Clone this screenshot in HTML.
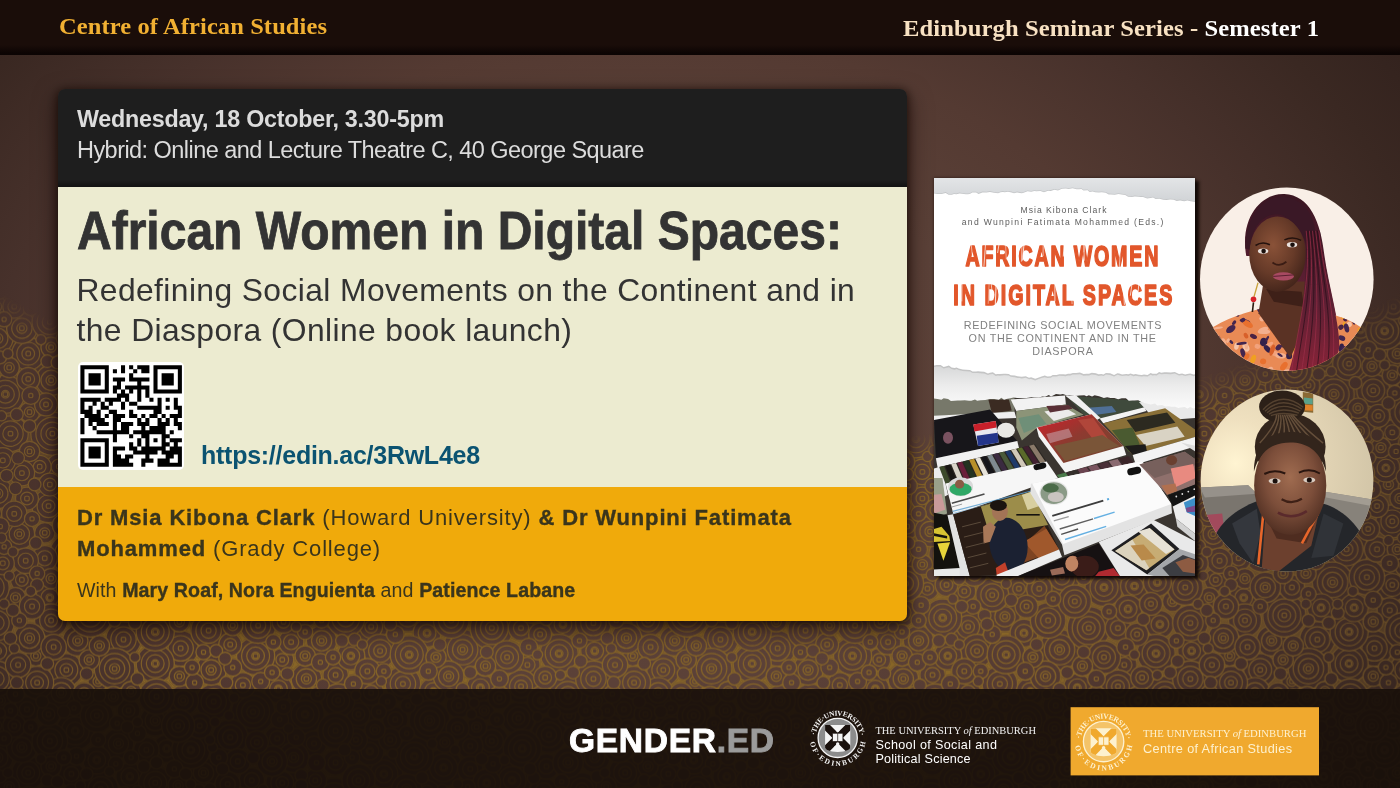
<!DOCTYPE html>
<html lang="en">
<head>
<meta charset="utf-8">
<title>African Women in Digital Spaces – Centre of African Studies</title>
<style>
html,body{margin:0;padding:0}
body{width:1400px;height:788px;position:relative;overflow:hidden;background:radial-gradient(ellipse 950px 700px at 650px 420px,#5f433a 0%,#5b4138 38%,#543a32 55%,#47312b 70%,#3a2822 85%,#30201c 100%);font-family:"Liberation Sans",sans-serif}
.abs{position:absolute}
#card,.hd,#ports,#book{will-change:transform}
#pat{left:0;top:0;width:1400px;height:788px}
.pf{fill:#000;stroke:#fff;stroke-width:.98}
.pr{fill:none;stroke:#fff;stroke-width:.94}
#topbar{left:0;top:0;width:1400px;height:54.5px;background:linear-gradient(180deg,#1a0d09 0,#1a0d09 45px,#0c0403 53px,#0b0403 100%)}
#footer{left:0;top:689px;width:1400px;height:99px;background:rgba(24,15,10,.915)}
.hd{font-family:"Liberation Serif",serif;font-weight:700;font-size:24.5px;line-height:30px;white-space:pre;top:10px}
#card{left:58px;top:89px;width:849px;height:532px;border-radius:7px;overflow:hidden;box-shadow:0 2px 8px 1px rgba(20,8,4,.75),0 9px 22px 2px rgba(20,8,4,.5)}
#c1{left:0;top:0;width:849px;height:98px;background:linear-gradient(180deg,#1e1e1e 0,#1e1e1e 91px,#121212 98px)}
#c2{left:0;top:98px;width:849px;height:301px;background:#ecebd0}
#c3{left:0;top:398.4px;width:849px;height:133.6px;background:#f0aa0b}
.t{position:absolute;white-space:pre;transform-origin:0 50%}
#c4 b{-webkit-text-stroke:.35px #3a351c}
</style>
</head>
<body>
<svg id="pat" class="abs" width="1400" height="788" viewBox="0 0 1400 788">
<defs><g id="k4"><circle r="4" class="pf"/></g><g id="k5"><circle r="5" class="pf"/></g><g id="k6"><circle r="6" class="pf"/><rect x="-1.6" y="-1.6" width="3.2" height="3.2" rx="1" class="pr"/></g><g id="k7"><circle r="7" class="pf"/><rect x="-1.6" y="-1.6" width="3.2" height="3.2" rx="1" class="pr"/></g><g id="k8"><circle r="8" class="pf"/><circle r="4.0" class="pr"/><rect x="-1.8" y="-1.8" width="3.6" height="3.6" rx="1.1" class="pr"/></g><g id="k9"><circle r="9" class="pf"/><circle r="5.0" class="pr"/><rect x="-1.8" y="-1.8" width="3.6" height="3.6" rx="1.1" class="pr"/></g><g id="k10"><circle r="10" class="pf"/><circle r="6.0" class="pr"/><rect x="-1.8" y="-1.8" width="3.6" height="3.6" rx="1.1" class="pr"/></g><g id="k11"><circle r="11" class="pf"/><circle r="7.0" class="pr"/><circle r="3.0" class="pr"/><rect x="-1.8" y="-1.8" width="3.6" height="3.6" rx="1.1" class="pr"/></g><g id="k12"><circle r="12" class="pf"/><circle r="8.0" class="pr"/><circle r="4.0" class="pr"/><rect x="-1.8" y="-1.8" width="3.6" height="3.6" rx="1.1" class="pr"/></g><g id="k13"><circle r="13" class="pf"/><circle r="9.0" class="pr"/><circle r="5.0" class="pr"/><rect x="-1.8" y="-1.8" width="3.6" height="3.6" rx="1.1" class="pr"/></g><g id="k14"><circle r="14" class="pf"/><circle r="10.0" class="pr"/><circle r="6.0" class="pr"/><rect x="-1.8" y="-1.8" width="3.6" height="3.6" rx="1.1" class="pr"/></g><g id="k15"><circle r="15" class="pf"/><circle r="11.0" class="pr"/><circle r="7.0" class="pr"/><circle r="3.0" class="pr"/><rect x="-1.8" y="-1.8" width="3.6" height="3.6" rx="1.1" class="pr"/></g><g id="k16"><circle r="16" class="pf"/><circle r="12.0" class="pr"/><circle r="8.0" class="pr"/><circle r="4.0" class="pr"/><rect x="-1.8" y="-1.8" width="3.6" height="3.6" rx="1.1" class="pr"/></g><g id="k17"><circle r="17" class="pf"/><circle r="13.0" class="pr"/><circle r="9.0" class="pr"/><circle r="5.0" class="pr"/><rect x="-1.8" y="-1.8" width="3.6" height="3.6" rx="1.1" class="pr"/></g>
<pattern id="tileL" width="470" height="330" patternUnits="userSpaceOnUse" patternTransform="translate(13 7) scale(1.27)"><rect width="470" height="330" fill="#000"/><use href="#k9" x="212" y="184"/><use href="#k13" x="212" y="281"/><use href="#k14" x="87" y="168"/><use href="#k15" x="44" y="100"/><use href="#k16" x="253" y="293"/><use href="#k9" x="279" y="130"/><use href="#k14" x="307" y="203"/><use href="#k15" x="292" y="274"/><use href="#k13" x="28" y="63"/><use href="#k11" x="281" y="256"/><use href="#k17" x="110" y="97"/><use href="#k12" x="311" y="150"/><use href="#k15" x="191" y="181"/><use href="#k13" x="332" y="104"/><use href="#k15" x="241" y="10"/><use href="#k15" x="241" y="340"/><use href="#k10" x="188" y="279"/><use href="#k17" x="31" y="6"/><use href="#k17" x="31" y="336"/><use href="#k16" x="100" y="305"/><use href="#k10" x="220" y="323"/><use href="#k10" x="220" y="-7"/><use href="#k15" x="365" y="89"/><use href="#k10" x="146" y="5"/><use href="#k10" x="146" y="335"/><use href="#k13" x="356" y="39"/><use href="#k9" x="332" y="4"/><use href="#k9" x="332" y="334"/><use href="#k13" x="374" y="58"/><use href="#k14" x="210" y="63"/><use href="#k10" x="197" y="126"/><use href="#k12" x="405" y="321"/><use href="#k12" x="405" y="-9"/><use href="#k14" x="468" y="6"/><use href="#k14" x="468" y="336"/><use href="#k14" x="-2" y="6"/><use href="#k14" x="-2" y="336"/><use href="#k11" x="121" y="254"/><use href="#k15" x="389" y="127"/><use href="#k13" x="42" y="192"/><use href="#k9" x="7" y="121"/><use href="#k9" x="477" y="121"/><use href="#k14" x="406" y="60"/><use href="#k13" x="146" y="75"/><use href="#k13" x="340" y="52"/><use href="#k9" x="322" y="128"/><use href="#k12" x="51" y="169"/><use href="#k12" x="112" y="232"/><use href="#k9" x="197" y="298"/><use href="#k13" x="131" y="302"/><use href="#k14" x="209" y="20"/><use href="#k14" x="132" y="175"/><use href="#k9" x="43" y="46"/><use href="#k8" x="460" y="216"/><use href="#k16" x="274" y="46"/><use href="#k11" x="433" y="156"/><use href="#k17" x="329" y="317"/><use href="#k17" x="329" y="-13"/><use href="#k14" x="422" y="243"/><use href="#k11" x="372" y="301"/><use href="#k10" x="405" y="188"/><use href="#k15" x="178" y="4"/><use href="#k15" x="178" y="334"/><use href="#k12" x="38" y="210"/><use href="#k9" x="438" y="228"/><use href="#k12" x="243" y="169"/><use href="#k13" x="282" y="158"/><use href="#k9" x="449" y="37"/><use href="#k12" x="120" y="4"/><use href="#k12" x="120" y="334"/><use href="#k8" x="67" y="201"/><use href="#k9" x="80" y="298"/><use href="#k10" x="234" y="79"/><use href="#k10" x="312" y="65"/><use href="#k13" x="377" y="248"/><use href="#k11" x="413" y="126"/><use href="#k11" x="98" y="44"/><use href="#k15" x="393" y="279"/><use href="#k14" x="446" y="91"/><use href="#k9" x="232" y="104"/><use href="#k12" x="150" y="273"/><use href="#k12" x="409" y="14"/><use href="#k17" x="268" y="102"/><use href="#k13" x="301" y="133"/><use href="#k13" x="12" y="273"/><use href="#k13" x="482" y="273"/><use href="#k11" x="209" y="207"/><use href="#k16" x="354" y="176"/><use href="#k11" x="84" y="90"/><use href="#k13" x="398" y="230"/><use href="#k10" x="41" y="307"/><use href="#k17" x="61" y="149"/><use href="#k15" x="339" y="269"/><use href="#k11" x="458" y="177"/><use href="#k11" x="-12" y="177"/><use href="#k9" x="163" y="27"/><use href="#k12" x="160" y="139"/><use href="#k13" x="272" y="227"/><use href="#k13" x="146" y="125"/><use href="#k8" x="143" y="46"/><use href="#k8" x="13" y="319"/><use href="#k15" x="430" y="179"/><use href="#k15" x="230" y="227"/><use href="#k9" x="159" y="296"/><use href="#k10" x="246" y="36"/><use href="#k14" x="290" y="304"/><use href="#k12" x="91" y="75"/><use href="#k15" x="49" y="240"/><use href="#k13" x="400" y="205"/><use href="#k13" x="289" y="177"/><use href="#k11" x="423" y="104"/><use href="#k10" x="62" y="29"/><use href="#k10" x="46" y="274"/><use href="#k17" x="189" y="225"/><use href="#k15" x="427" y="319"/><use href="#k15" x="427" y="-11"/><use href="#k11" x="331" y="209"/><use href="#k17" x="377" y="159"/><use href="#k8" x="18" y="181"/><use href="#k15" x="464" y="305"/><use href="#k15" x="-6" y="305"/><use href="#k10" x="36" y="32"/><use href="#k10" x="219" y="170"/><use href="#k16" x="99" y="123"/><use href="#k13" x="169" y="122"/><use href="#k10" x="360" y="252"/><use href="#k11" x="141" y="33"/><use href="#k14" x="158" y="217"/><use href="#k9" x="250" y="128"/><use href="#k10" x="301" y="231"/><use href="#k10" x="237" y="250"/><use href="#k12" x="5" y="85"/><use href="#k12" x="475" y="85"/><use href="#k10" x="181" y="309"/><use href="#k10" x="254" y="196"/><use href="#k8" x="443" y="138"/><use href="#k8" x="187" y="103"/><use href="#k12" x="134" y="216"/><use href="#k10" x="25" y="104"/><use href="#k13" x="337" y="83"/><use href="#k9" x="21" y="32"/><use href="#k13" x="68" y="316"/><use href="#k11" x="167" y="51"/><use href="#k10" x="282" y="210"/><use href="#k14" x="171" y="245"/><use href="#k11" x="368" y="206"/><use href="#k12" x="292" y="34"/><use href="#k10" x="208" y="246"/><use href="#k15" x="140" y="255"/><use href="#k11" x="326" y="163"/><use href="#k15" x="308" y="108"/><use href="#k10" x="11" y="223"/><use href="#k12" x="83" y="250"/><use href="#k8" x="115" y="73"/><use href="#k14" x="158" y="319"/><use href="#k14" x="158" y="-11"/><use href="#k11" x="355" y="324"/><use href="#k11" x="355" y="-6"/><use href="#k10" x="115" y="53"/><use href="#k14" x="279" y="74"/><use href="#k10" x="400" y="159"/><use href="#k12" x="458" y="261"/><use href="#k12" x="-12" y="261"/><use href="#k13" x="369" y="19"/><use href="#k11" x="418" y="288"/><use href="#k8" x="325" y="27"/><use href="#k9" x="91" y="224"/><use href="#k10" x="307" y="4"/><use href="#k10" x="307" y="334"/><use href="#k10" x="191" y="24"/><use href="#k13" x="435" y="46"/><use href="#k10" x="360" y="270"/><use href="#k17" x="226" y="303"/><use href="#k10" x="144" y="145"/><use href="#k13" x="266" y="9"/><use href="#k13" x="266" y="339"/><use href="#k14" x="217" y="41"/><use href="#k15" x="112" y="187"/><use href="#k14" x="356" y="119"/><use href="#k14" x="213" y="133"/><use href="#k10" x="67" y="127"/><use href="#k15" x="387" y="39"/><use href="#k12" x="343" y="197"/><use href="#k13" x="256" y="216"/><use href="#k9" x="11" y="57"/><use href="#k10" x="420" y="268"/><use href="#k13" x="66" y="228"/><use href="#k11" x="92" y="276"/><use href="#k9" x="178" y="82"/><use href="#k11" x="29" y="135"/><use href="#k16" x="328" y="232"/><use href="#k8" x="2" y="135"/><use href="#k8" x="472" y="135"/><use href="#k14" x="196" y="81"/><use href="#k14" x="126" y="119"/><use href="#k10" x="10" y="106"/><use href="#k10" x="480" y="106"/><use href="#k8" x="229" y="62"/><use href="#k14" x="193" y="157"/><use href="#k12" x="379" y="321"/><use href="#k12" x="379" y="-9"/><use href="#k13" x="310" y="22"/><use href="#k13" x="448" y="286"/><use href="#k14" x="348" y="299"/><use href="#k10" x="56" y="299"/><use href="#k14" x="453" y="127"/><use href="#k9" x="321" y="90"/><use href="#k15" x="112" y="162"/><use href="#k10" x="147" y="236"/><use href="#k8" x="25" y="84"/><use href="#k14" x="457" y="155"/><use href="#k14" x="-13" y="155"/><use href="#k9" x="80" y="22"/><use href="#k12" x="30" y="294"/><use href="#k13" x="30" y="153"/><use href="#k8" x="30" y="120"/><use href="#k11" x="166" y="92"/><use href="#k13" x="202" y="317"/><use href="#k13" x="202" y="-13"/><use href="#k11" x="427" y="18"/><use href="#k14" x="52" y="61"/><use href="#k15" x="401" y="254"/><use href="#k16" x="80" y="191"/><use href="#k12" x="156" y="192"/><use href="#k15" x="262" y="151"/><use href="#k10" x="122" y="37"/><use href="#k14" x="154" y="161"/><use href="#k9" x="103" y="28"/><use href="#k15" x="312" y="180"/><use href="#k10" x="433" y="69"/><use href="#k10" x="15" y="142"/><use href="#k10" x="177" y="264"/><use href="#k14" x="181" y="39"/><use href="#k11" x="266" y="181"/><use href="#k11" x="230" y="147"/><use href="#k12" x="252" y="83"/><use href="#k10" x="164" y="72"/><use href="#k12" x="7" y="253"/><use href="#k12" x="477" y="253"/><use href="#k15" x="316" y="260"/><use href="#k14" x="69" y="286"/><use href="#k10" x="78" y="47"/><use href="#k8" x="71" y="104"/><use href="#k15" x="437" y="212"/><use href="#k12" x="458" y="53"/><use href="#k12" x="-12" y="53"/><use href="#k10" x="351" y="220"/><use href="#k9" x="267" y="310"/><use href="#k10" x="423" y="83"/><use href="#k15" x="97" y="8"/><use href="#k15" x="97" y="338"/><use href="#k10" x="134" y="97"/><use href="#k9" x="134" y="63"/><use href="#k12" x="406" y="100"/><use href="#k14" x="113" y="213"/><use href="#k13" x="19" y="202"/><use href="#k11" x="431" y="123"/><use href="#k14" x="250" y="317"/><use href="#k14" x="250" y="-13"/><use href="#k8" x="383" y="78"/><use href="#k14" x="457" y="199"/><use href="#k14" x="-13" y="199"/><use href="#k12" x="437" y="265"/><use href="#k8" x="314" y="52"/><use href="#k12" x="221" y="261"/><use href="#k12" x="46" y="127"/><use href="#k8" x="343" y="20"/><use href="#k9" x="456" y="236"/><use href="#k8" x="60" y="116"/><use href="#k13" x="112" y="281"/><use href="#k11" x="72" y="5"/><use href="#k11" x="72" y="335"/><use href="#k9" x="246" y="57"/><use href="#k9" x="257" y="66"/><use href="#k9" x="408" y="38"/><use href="#k12" x="231" y="199"/><use href="#k10" x="4" y="188"/><use href="#k10" x="474" y="188"/><use href="#k9" x="270" y="247"/><use href="#k9" x="449" y="8"/><use href="#k9" x="449" y="338"/><use href="#k11" x="90" y="143"/><use href="#k8" x="350" y="67"/><use href="#k14" x="345" y="153"/><use href="#k8" x="371" y="224"/><use href="#k9" x="415" y="164"/><use href="#k10" x="1" y="69"/><use href="#k10" x="471" y="69"/><use href="#k13" x="287" y="5"/><use href="#k13" x="287" y="335"/><use href="#k14" x="29" y="248"/><use href="#k13" x="389" y="182"/><use href="#k8" x="365" y="237"/><use href="#k10" x="279" y="193"/><use href="#k9" x="378" y="107"/><use href="#k8" x="453" y="69"/><use href="#k9" x="299" y="90"/><use href="#k10" x="338" y="128"/><use href="#k11" x="444" y="304"/><use href="#k9" x="277" y="25"/><use href="#k14" x="254" y="240"/><use href="#k11" x="393" y="90"/><use href="#k10" x="254" y="265"/><use href="#k13" x="130" y="236"/><use href="#k11" x="116" y="143"/><use href="#k10" x="7" y="37"/><use href="#k10" x="477" y="37"/><use href="#k9" x="29" y="46"/><use href="#k13" x="394" y="305"/><use href="#k10" x="169" y="282"/><use href="#k10" x="181" y="204"/><use href="#k12" x="13" y="167"/><use href="#k12" x="483" y="167"/><use href="#k14" x="233" y="124"/><use href="#k9" x="442" y="245"/><use href="#k13" x="366" y="138"/><use href="#k11" x="416" y="216"/><use href="#k11" x="408" y="144"/><use href="#k10" x="326" y="289"/><use href="#k10" x="105" y="255"/><use href="#k8" x="156" y="110"/><use href="#k12" x="310" y="286"/><use href="#k11" x="373" y="281"/><use href="#k9" x="462" y="108"/><use href="#k9" x="-8" y="108"/><use href="#k10" x="391" y="13"/><use href="#k9" x="74" y="65"/><use href="#k12" x="209" y="97"/><use href="#k13" x="54" y="13"/><use href="#k13" x="54" y="343"/><use href="#k9" x="238" y="279"/><use href="#k8" x="137" y="17"/><use href="#k12" x="298" y="58"/><use href="#k11" x="179" y="141"/><use href="#k12" x="204" y="264"/><use href="#k13" x="272" y="279"/><use href="#k8" x="130" y="283"/><use href="#k8" x="131" y="197"/><use href="#k8" x="67" y="89"/><use href="#k9" x="171" y="172"/><use href="#k9" x="189" y="63"/><use href="#k9" x="383" y="214"/><use href="#k8" x="87" y="34"/><use href="#k11" x="66" y="263"/><use href="#k10" x="32" y="174"/><use href="#k10" x="462" y="27"/><use href="#k10" x="-8" y="27"/><use href="#k10" x="287" y="116"/><use href="#k9" x="135" y="322"/><use href="#k9" x="135" y="-8"/><use href="#k9" x="419" y="198"/><use href="#k9" x="450" y="322"/><use href="#k9" x="450" y="-8"/><use href="#k9" x="297" y="247"/><use href="#k9" x="426" y="140"/><use href="#k9" x="28" y="227"/><use href="#k9" x="192" y="249"/><use href="#k9" x="213" y="154"/><use href="#k9" x="350" y="238"/><use href="#k9" x="127" y="81"/><use href="#k9" x="40" y="78"/><use href="#k9" x="261" y="28"/><use href="#k9" x="56" y="211"/><use href="#k9" x="1" y="236"/><use href="#k9" x="471" y="236"/><use href="#k9" x="328" y="142"/><use href="#k9" x="265" y="125"/><use href="#k9" x="12" y="293"/><use href="#k9" x="305" y="318"/><use href="#k9" x="26" y="313"/><use href="#k9" x="324" y="42"/><use href="#k8" x="30" y="268"/><use href="#k8" x="79" y="213"/><use href="#k8" x="444" y="23"/><use href="#k8" x="93" y="209"/><use href="#k8" x="13" y="20"/><use href="#k8" x="49" y="321"/><use href="#k8" x="49" y="-9"/><use href="#k8" x="407" y="80"/><use href="#k8" x="150" y="97"/><use href="#k8" x="181" y="293"/><use href="#k8" x="218" y="81"/><use href="#k8" x="146" y="290"/><use href="#k8" x="119" y="316"/><use href="#k8" x="55" y="81"/><use href="#k8" x="230" y="181"/><use href="#k8" x="117" y="22"/><use href="#k8" x="217" y="113"/><use href="#k8" x="310" y="304"/><use href="#k8" x="246" y="109"/><use href="#k8" x="60" y="184"/><use href="#k8" x="333" y="182"/><use href="#k8" x="78" y="116"/><use href="#k8" x="372" y="189"/><use href="#k8" x="131" y="154"/><use href="#k8" x="413" y="304"/><use href="#k8" x="328" y="66"/><use href="#k8" x="338" y="33"/><use href="#k8" x="152" y="57"/><use href="#k8" x="86" y="321"/><use href="#k8" x="198" y="111"/><use href="#k8" x="159" y="13"/><use href="#k8" x="467" y="284"/><use href="#k8" x="-3" y="284"/><use href="#k8" x="353" y="11"/><use href="#k8" x="340" y="249"/><use href="#k8" x="102" y="61"/><use href="#k8" x="441" y="110"/><use href="#k8" x="62" y="45"/><use href="#k8" x="285" y="239"/><use href="#k8" x="173" y="157"/><use href="#k8" x="68" y="173"/><use href="#k8" x="232" y="28"/><use href="#k8" x="199" y="47"/><use href="#k7" x="98" y="242"/><use href="#k7" x="2" y="211"/><use href="#k7" x="472" y="211"/><use href="#k7" x="309" y="40"/><use href="#k7" x="86" y="106"/><use href="#k7" x="301" y="75"/><use href="#k7" x="89" y="58"/><use href="#k7" x="235" y="47"/><use href="#k7" x="127" y="270"/><use href="#k7" x="421" y="33"/><use href="#k7" x="210" y="231"/><use href="#k7" x="131" y="137"/><use href="#k7" x="290" y="100"/><use href="#k7" x="277" y="320"/><use href="#k7" x="242" y="186"/><use href="#k7" x="173" y="190"/><use href="#k7" x="186" y="116"/><use href="#k7" x="239" y="265"/><use href="#k7" x="195" y="201"/><use href="#k7" x="156" y="40"/><use href="#k7" x="198" y="4"/><use href="#k7" x="198" y="334"/><use href="#k7" x="383" y="199"/><use href="#k7" x="301" y="164"/><use href="#k7" x="295" y="217"/><use href="#k7" x="245" y="141"/><use href="#k7" x="429" y="299"/><use href="#k7" x="130" y="50"/><use href="#k7" x="50" y="260"/><use href="#k7" x="225" y="92"/><use href="#k7" x="406" y="174"/><use href="#k7" x="46" y="289"/><use href="#k7" x="268" y="203"/><use href="#k7" x="162" y="261"/><use href="#k7" x="350" y="101"/><use href="#k7" x="389" y="67"/><use href="#k7" x="378" y="266"/><use href="#k7" x="273" y="297"/><use href="#k7" x="174" y="105"/><use href="#k7" x="74" y="78"/><use href="#k7" x="327" y="193"/><use href="#k7" x="143" y="202"/><use href="#k7" x="392" y="108"/><use href="#k7" x="144" y="108"/><use href="#k7" x="176" y="64"/><use href="#k7" x="243" y="97"/><use href="#k7" x="14" y="306"/><use href="#k7" x="460" y="79"/><use href="#k7" x="223" y="245"/><use href="#k6" x="381" y="231"/><use href="#k6" x="444" y="61"/><use href="#k6" x="310" y="82"/><use href="#k6" x="149" y="20"/><use href="#k6" x="310" y="242"/><use href="#k6" x="311" y="220"/><use href="#k6" x="357" y="56"/><use href="#k6" x="67" y="247"/><use href="#k6" x="14" y="237"/><use href="#k6" x="5" y="153"/><use href="#k6" x="475" y="153"/><use href="#k6" x="210" y="2"/><use href="#k6" x="210" y="332"/><use href="#k6" x="436" y="6"/><use href="#k6" x="436" y="336"/><use href="#k6" x="267" y="261"/><use href="#k6" x="80" y="132"/><use href="#k6" x="368" y="2"/><use href="#k6" x="368" y="332"/><use href="#k6" x="325" y="15"/><use href="#k6" x="199" y="35"/><use href="#k6" x="320" y="77"/><use href="#k6" x="286" y="90"/><use href="#k6" x="432" y="280"/><use href="#k6" x="196" y="140"/><use href="#k6" x="222" y="7"/><use href="#k6" x="222" y="337"/><use href="#k6" x="393" y="146"/><use href="#k6" x="148" y="304"/><use href="#k6" x="286" y="142"/><use href="#k6" x="418" y="46"/><use href="#k6" x="82" y="234"/><use href="#k6" x="254" y="47"/><use href="#k6" x="243" y="153"/><use href="#k6" x="243" y="69"/><use href="#k6" x="108" y="323"/><use href="#k6" x="108" y="-7"/><use href="#k6" x="361" y="70"/><use href="#k6" x="463" y="95"/><use href="#k6" x="-7" y="95"/><use href="#k6" x="463" y="246"/><use href="#k6" x="75" y="34"/><use href="#k6" x="15" y="73"/><use href="#k6" x="150" y="178"/><use href="#k6" x="19" y="116"/><use href="#k6" x="361" y="311"/><use href="#k6" x="288" y="225"/><use href="#k6" x="50" y="35"/><use href="#k6" x="424" y="59"/><use href="#k6" x="349" y="136"/><use href="#k6" x="48" y="222"/><use href="#k6" x="405" y="293"/><use href="#k6" x="141" y="190"/><use href="#k6" x="358" y="284"/><use href="#k6" x="446" y="169"/><use href="#k6" x="252" y="182"/><use href="#k6" x="396" y="75"/><use href="#k6" x="81" y="266"/><use href="#k6" x="344" y="4"/><use href="#k6" x="344" y="334"/><use href="#k6" x="468" y="224"/><use href="#k6" x="-2" y="224"/><use href="#k6" x="398" y="24"/><use href="#k6" x="40" y="261"/><use href="#k6" x="204" y="194"/><use href="#k6" x="373" y="119"/><use href="#k6" x="64" y="74"/><use href="#k6" x="42" y="142"/><use href="#k6" x="292" y="193"/><use href="#k6" x="171" y="300"/><use href="#k6" x="240" y="211"/><use href="#k6" x="93" y="261"/><use href="#k6" x="213" y="221"/><use href="#k6" x="205" y="170"/><use href="#k6" x="451" y="224"/><use href="#k6" x="403" y="115"/><use href="#k6" x="230" y="162"/><use href="#k6" x="175" y="22"/><use href="#k6" x="180" y="94"/><use href="#k5" x="320" y="7"/><use href="#k5" x="259" y="169"/><use href="#k5" x="234" y="322"/><use href="#k5" x="58" y="195"/><use href="#k5" x="128" y="25"/><use href="#k5" x="379" y="6"/><use href="#k5" x="379" y="336"/><use href="#k5" x="27" y="279"/><use href="#k5" x="392" y="329"/><use href="#k5" x="392" y="-1"/><use href="#k5" x="227" y="275"/><use href="#k5" x="360" y="194"/><use href="#k5" x="19" y="125"/><use href="#k5" x="295" y="149"/><use href="#k5" x="426" y="226"/><use href="#k5" x="98" y="199"/><use href="#k5" x="27" y="187"/><use href="#k5" x="441" y="194"/><use href="#k5" x="354" y="207"/><use href="#k5" x="354" y="23"/><use href="#k5" x="160" y="177"/><use href="#k5" x="254" y="117"/><use href="#k5" x="207" y="117"/><use href="#k5" x="322" y="277"/><use href="#k5" x="324" y="56"/><use href="#k5" x="88" y="289"/><use href="#k5" x="267" y="323"/><use href="#k5" x="447" y="185"/><use href="#k5" x="420" y="152"/><use href="#k5" x="294" y="19"/><use href="#k5" x="277" y="142"/><use href="#k5" x="68" y="212"/><use href="#k5" x="435" y="30"/><use href="#k5" x="184" y="128"/><use href="#k5" x="373" y="178"/><use href="#k5" x="390" y="57"/><use href="#k5" x="269" y="168"/><use href="#k5" x="18" y="92"/><use href="#k5" x="168" y="202"/><use href="#k5" x="432" y="289"/><use href="#k5" x="62" y="98"/><use href="#k5" x="189" y="261"/><use href="#k5" x="122" y="64"/><use href="#k5" x="126" y="17"/><use href="#k5" x="103" y="268"/><use href="#k5" x="420" y="70"/><use href="#k5" x="117" y="296"/><use href="#k5" x="2" y="49"/><use href="#k5" x="472" y="49"/><use href="#k5" x="17" y="46"/><use href="#k5" x="410" y="277"/><use href="#k5" x="421" y="5"/><use href="#k5" x="421" y="335"/><use href="#k5" x="235" y="92"/><use href="#k5" x="216" y="195"/><use href="#k5" x="67" y="54"/><use href="#k5" x="363" y="291"/><use href="#k5" x="413" y="113"/><use href="#k5" x="40" y="225"/><use href="#k5" x="58" y="328"/><use href="#k5" x="58" y="-2"/><use href="#k5" x="465" y="39"/><use href="#k5" x="-5" y="39"/><use href="#k5" x="90" y="237"/><use href="#k5" x="460" y="276"/><use href="#k5" x="80" y="153"/><use href="#k5" x="284" y="289"/><use href="#k5" x="4" y="25"/><use href="#k5" x="474" y="25"/><use href="#k5" x="222" y="212"/><use href="#k5" x="82" y="310"/><use href="#k5" x="143" y="312"/><use href="#k5" x="58" y="274"/><use href="#k5" x="369" y="262"/><use href="#k5" x="113" y="265"/><use href="#k5" x="224" y="71"/><use href="#k5" x="180" y="55"/><use href="#k5" x="454" y="247"/><use href="#k5" x="92" y="25"/><use href="#k5" x="110" y="37"/><use href="#k5" x="105" y="78"/><use href="#k5" x="336" y="172"/><use href="#k5" x="69" y="18"/><use href="#k5" x="334" y="15"/><use href="#k5" x="136" y="274"/><use href="#k5" x="468" y="167"/><use href="#k5" x="-2" y="167"/><use href="#k5" x="318" y="215"/><use href="#k5" x="381" y="96"/><use href="#k5" x="-0" y="145"/><use href="#k5" x="470" y="145"/><use href="#k5" x="234" y="38"/><use href="#k5" x="366" y="106"/><use href="#k5" x="165" y="270"/><use href="#k5" x="3" y="321"/><use href="#k5" x="473" y="321"/><use href="#k5" x="261" y="255"/><use href="#k5" x="103" y="147"/><use href="#k5" x="96" y="155"/><use href="#k5" x="226" y="19"/><use href="#k5" x="294" y="321"/><use href="#k5" x="53" y="311"/><use href="#k5" x="35" y="280"/><use href="#k5" x="227" y="283"/><use href="#k5" x="194" y="12"/><use href="#k5" x="275" y="120"/><use href="#k5" x="23" y="217"/><use href="#k5" x="13" y="-0"/><use href="#k5" x="13" y="330"/><use href="#k5" x="297" y="156"/><use href="#k5" x="244" y="204"/><use href="#k5" x="316" y="137"/><use href="#k5" x="330" y="119"/><use href="#k5" x="3" y="202"/><use href="#k5" x="473" y="202"/><use href="#k5" x="155" y="286"/><use href="#k5" x="444" y="75"/><use href="#k5" x="48" y="27"/><use href="#k5" x="414" y="27"/><use href="#k5" x="134" y="7"/><use href="#k5" x="352" y="77"/><use href="#k5" x="407" y="270"/><use href="#k5" x="167" y="183"/><use href="#k5" x="319" y="300"/><use href="#k4" x="204" y="146"/><use href="#k4" x="441" y="329"/><use href="#k4" x="441" y="-1"/><use href="#k4" x="350" y="282"/><use href="#k4" x="330" y="250"/><use href="#k4" x="250" y="24"/><use href="#k4" x="370" y="43"/><use href="#k4" x="255" y="19"/><use href="#k4" x="431" y="196"/><use href="#k4" x="299" y="258"/><use href="#k4" x="61" y="105"/><use href="#k4" x="455" y="17"/><use href="#k4" x="383" y="294"/><use href="#k4" x="290" y="201"/><use href="#k4" x="374" y="74"/><use href="#k4" x="183" y="72"/><use href="#k4" x="14" y="130"/><use href="#k4" x="463" y="140"/><use href="#k4" x="287" y="20"/><use href="#k4" x="413" y="229"/><use href="#k4" x="338" y="67"/><use href="#k4" x="370" y="35"/><use href="#k4" x="323" y="116"/><use href="#k4" x="157" y="253"/><use href="#k4" x="98" y="287"/><use href="#k4" x="159" y="233"/><use href="#k4" x="461" y="322"/><use href="#k4" x="143" y="90"/><use href="#k4" x="195" y="97"/><use href="#k4" x="170" y="228"/><use href="#k4" x="125" y="70"/><use href="#k4" x="76" y="272"/><use href="#k4" x="258" y="54"/><use href="#k4" x="366" y="317"/><use href="#k4" x="155" y="247"/><use href="#k4" x="53" y="283"/><use href="#k4" x="387" y="263"/><use href="#k4" x="165" y="105"/><use href="#k4" x="165" y="38"/><use href="#k4" x="294" y="80"/><use href="#k4" x="98" y="233"/><use href="#k4" x="197" y="286"/><use href="#k4" x="223" y="158"/><use href="#k4" x="190" y="52"/><use href="#k4" x="361" y="227"/><use href="#k4" x="398" y="3"/><use href="#k4" x="398" y="333"/><use href="#k4" x="270" y="136"/><use href="#k4" x="451" y="110"/><use href="#k4" x="415" y="1"/><use href="#k4" x="415" y="331"/><use href="#k4" x="348" y="255"/><use href="#k4" x="301" y="45"/><use href="#k4" x="187" y="320"/><use href="#k4" x="297" y="290"/><use href="#k4" x="209" y="296"/><use href="#k4" x="103" y="140"/><use href="#k4" x="467" y="118"/><use href="#k4" x="-3" y="118"/><use href="#k4" x="22" y="262"/><use href="#k4" x="174" y="214"/><use href="#k4" x="270" y="212"/><use href="#k4" x="263" y="75"/><use href="#k4" x="96" y="182"/><use href="#k4" x="466" y="273"/><use href="#k4" x="-4" y="273"/><use href="#k4" x="405" y="27"/><use href="#k4" x="338" y="286"/><use href="#k4" x="415" y="74"/><use href="#k4" x="78" y="140"/><use href="#k4" x="384" y="22"/><use href="#k4" x="266" y="83"/><use href="#k4" x="140" y="282"/><use href="#k4" x="340" y="117"/><use href="#k4" x="105" y="71"/><use href="#k4" x="1" y="175"/><use href="#k4" x="471" y="175"/><use href="#k4" x="344" y="211"/><use href="#k4" x="460" y="226"/><use href="#k4" x="275" y="172"/><use href="#k4" x="0" y="99"/><use href="#k4" x="470" y="99"/><use href="#k4" x="312" y="124"/><use href="#k4" x="207" y="303"/><use href="#k4" x="115" y="130"/><use href="#k4" x="42" y="21"/><use href="#k4" x="430" y="93"/><use href="#k4" x="440" y="14"/><use href="#k4" x="286" y="320"/><use href="#k4" x="413" y="180"/><use href="#k4" x="217" y="238"/><use href="#k4" x="363" y="218"/><use href="#k4" x="154" y="88"/><use href="#k4" x="190" y="290"/><use href="#k4" x="358" y="104"/><use href="#k4" x="461" y="88"/><use href="#k4" x="221" y="104"/><use href="#k4" x="258" y="39"/><use href="#k4" x="413" y="88"/></pattern>
<pattern id="tileG" width="470" height="330" patternUnits="userSpaceOnUse" patternTransform="translate(13 7) scale(1.27)"><rect width="470" height="330" fill="#fff"/><g fill="#000"><circle cx="212" cy="184" r="9.49"/><circle cx="212" cy="281" r="13.49"/><circle cx="87" cy="168" r="14.49"/><circle cx="44" cy="100" r="15.49"/><circle cx="253" cy="293" r="16.49"/><circle cx="279" cy="130" r="9.49"/><circle cx="307" cy="203" r="14.49"/><circle cx="292" cy="274" r="15.49"/><circle cx="28" cy="63" r="13.49"/><circle cx="281" cy="256" r="11.49"/><circle cx="110" cy="97" r="17.49"/><circle cx="311" cy="150" r="12.49"/><circle cx="191" cy="181" r="15.49"/><circle cx="332" cy="104" r="13.49"/><circle cx="241" cy="10" r="15.49"/><circle cx="241" cy="340" r="15.49"/><circle cx="188" cy="279" r="10.49"/><circle cx="31" cy="6" r="17.49"/><circle cx="31" cy="336" r="17.49"/><circle cx="100" cy="305" r="16.49"/><circle cx="220" cy="323" r="10.49"/><circle cx="220" cy="-7" r="10.49"/><circle cx="365" cy="89" r="15.49"/><circle cx="146" cy="5" r="10.49"/><circle cx="146" cy="335" r="10.49"/><circle cx="356" cy="39" r="13.49"/><circle cx="332" cy="4" r="9.49"/><circle cx="332" cy="334" r="9.49"/><circle cx="374" cy="58" r="13.49"/><circle cx="210" cy="63" r="14.49"/><circle cx="197" cy="126" r="10.49"/><circle cx="405" cy="321" r="12.49"/><circle cx="405" cy="-9" r="12.49"/><circle cx="468" cy="6" r="14.49"/><circle cx="468" cy="336" r="14.49"/><circle cx="-2" cy="6" r="14.49"/><circle cx="-2" cy="336" r="14.49"/><circle cx="121" cy="254" r="11.49"/><circle cx="389" cy="127" r="15.49"/><circle cx="42" cy="192" r="13.49"/><circle cx="7" cy="121" r="9.49"/><circle cx="477" cy="121" r="9.49"/><circle cx="406" cy="60" r="14.49"/><circle cx="146" cy="75" r="13.49"/><circle cx="340" cy="52" r="13.49"/><circle cx="322" cy="128" r="9.49"/><circle cx="51" cy="169" r="12.49"/><circle cx="112" cy="232" r="12.49"/><circle cx="197" cy="298" r="9.49"/><circle cx="131" cy="302" r="13.49"/><circle cx="209" cy="20" r="14.49"/><circle cx="132" cy="175" r="14.49"/><circle cx="43" cy="46" r="9.49"/><circle cx="460" cy="216" r="8.49"/><circle cx="274" cy="46" r="16.49"/><circle cx="433" cy="156" r="11.49"/><circle cx="329" cy="317" r="17.49"/><circle cx="329" cy="-13" r="17.49"/><circle cx="422" cy="243" r="14.49"/><circle cx="372" cy="301" r="11.49"/><circle cx="405" cy="188" r="10.49"/><circle cx="178" cy="4" r="15.49"/><circle cx="178" cy="334" r="15.49"/><circle cx="38" cy="210" r="12.49"/><circle cx="438" cy="228" r="9.49"/><circle cx="243" cy="169" r="12.49"/><circle cx="282" cy="158" r="13.49"/><circle cx="449" cy="37" r="9.49"/><circle cx="120" cy="4" r="12.49"/><circle cx="120" cy="334" r="12.49"/><circle cx="67" cy="201" r="8.49"/><circle cx="80" cy="298" r="9.49"/><circle cx="234" cy="79" r="10.49"/><circle cx="312" cy="65" r="10.49"/><circle cx="377" cy="248" r="13.49"/><circle cx="413" cy="126" r="11.49"/><circle cx="98" cy="44" r="11.49"/><circle cx="393" cy="279" r="15.49"/><circle cx="446" cy="91" r="14.49"/><circle cx="232" cy="104" r="9.49"/><circle cx="150" cy="273" r="12.49"/><circle cx="409" cy="14" r="12.49"/><circle cx="268" cy="102" r="17.49"/><circle cx="301" cy="133" r="13.49"/><circle cx="12" cy="273" r="13.49"/><circle cx="482" cy="273" r="13.49"/><circle cx="209" cy="207" r="11.49"/><circle cx="354" cy="176" r="16.49"/><circle cx="84" cy="90" r="11.49"/><circle cx="398" cy="230" r="13.49"/><circle cx="41" cy="307" r="10.49"/><circle cx="61" cy="149" r="17.49"/><circle cx="339" cy="269" r="15.49"/><circle cx="458" cy="177" r="11.49"/><circle cx="-12" cy="177" r="11.49"/><circle cx="163" cy="27" r="9.49"/><circle cx="160" cy="139" r="12.49"/><circle cx="272" cy="227" r="13.49"/><circle cx="146" cy="125" r="13.49"/><circle cx="143" cy="46" r="8.49"/><circle cx="13" cy="319" r="8.49"/><circle cx="430" cy="179" r="15.49"/><circle cx="230" cy="227" r="15.49"/><circle cx="159" cy="296" r="9.49"/><circle cx="246" cy="36" r="10.49"/><circle cx="290" cy="304" r="14.49"/><circle cx="91" cy="75" r="12.49"/><circle cx="49" cy="240" r="15.49"/><circle cx="400" cy="205" r="13.49"/><circle cx="289" cy="177" r="13.49"/><circle cx="423" cy="104" r="11.49"/><circle cx="62" cy="29" r="10.49"/><circle cx="46" cy="274" r="10.49"/><circle cx="189" cy="225" r="17.49"/><circle cx="427" cy="319" r="15.49"/><circle cx="427" cy="-11" r="15.49"/><circle cx="331" cy="209" r="11.49"/><circle cx="377" cy="159" r="17.49"/><circle cx="18" cy="181" r="8.49"/><circle cx="464" cy="305" r="15.49"/><circle cx="-6" cy="305" r="15.49"/><circle cx="36" cy="32" r="10.49"/><circle cx="219" cy="170" r="10.49"/><circle cx="99" cy="123" r="16.49"/><circle cx="169" cy="122" r="13.49"/><circle cx="360" cy="252" r="10.49"/><circle cx="141" cy="33" r="11.49"/><circle cx="158" cy="217" r="14.49"/><circle cx="250" cy="128" r="9.49"/><circle cx="301" cy="231" r="10.49"/><circle cx="237" cy="250" r="10.49"/><circle cx="5" cy="85" r="12.49"/><circle cx="475" cy="85" r="12.49"/><circle cx="181" cy="309" r="10.49"/><circle cx="254" cy="196" r="10.49"/><circle cx="443" cy="138" r="8.49"/><circle cx="187" cy="103" r="8.49"/><circle cx="134" cy="216" r="12.49"/><circle cx="25" cy="104" r="10.49"/><circle cx="337" cy="83" r="13.49"/><circle cx="21" cy="32" r="9.49"/><circle cx="68" cy="316" r="13.49"/><circle cx="167" cy="51" r="11.49"/><circle cx="282" cy="210" r="10.49"/><circle cx="171" cy="245" r="14.49"/><circle cx="368" cy="206" r="11.49"/><circle cx="292" cy="34" r="12.49"/><circle cx="208" cy="246" r="10.49"/><circle cx="140" cy="255" r="15.49"/><circle cx="326" cy="163" r="11.49"/><circle cx="308" cy="108" r="15.49"/><circle cx="11" cy="223" r="10.49"/><circle cx="83" cy="250" r="12.49"/><circle cx="115" cy="73" r="8.49"/><circle cx="158" cy="319" r="14.49"/><circle cx="158" cy="-11" r="14.49"/><circle cx="355" cy="324" r="11.49"/><circle cx="355" cy="-6" r="11.49"/><circle cx="115" cy="53" r="10.49"/><circle cx="279" cy="74" r="14.49"/><circle cx="400" cy="159" r="10.49"/><circle cx="458" cy="261" r="12.49"/><circle cx="-12" cy="261" r="12.49"/><circle cx="369" cy="19" r="13.49"/><circle cx="418" cy="288" r="11.49"/><circle cx="325" cy="27" r="8.49"/><circle cx="91" cy="224" r="9.49"/><circle cx="307" cy="4" r="10.49"/><circle cx="307" cy="334" r="10.49"/><circle cx="191" cy="24" r="10.49"/><circle cx="435" cy="46" r="13.49"/><circle cx="360" cy="270" r="10.49"/><circle cx="226" cy="303" r="17.49"/><circle cx="144" cy="145" r="10.49"/><circle cx="266" cy="9" r="13.49"/><circle cx="266" cy="339" r="13.49"/><circle cx="217" cy="41" r="14.49"/><circle cx="112" cy="187" r="15.49"/><circle cx="356" cy="119" r="14.49"/><circle cx="213" cy="133" r="14.49"/><circle cx="67" cy="127" r="10.49"/><circle cx="387" cy="39" r="15.49"/><circle cx="343" cy="197" r="12.49"/><circle cx="256" cy="216" r="13.49"/><circle cx="11" cy="57" r="9.49"/><circle cx="420" cy="268" r="10.49"/><circle cx="66" cy="228" r="13.49"/><circle cx="92" cy="276" r="11.49"/><circle cx="178" cy="82" r="9.49"/><circle cx="29" cy="135" r="11.49"/><circle cx="328" cy="232" r="16.49"/><circle cx="2" cy="135" r="8.49"/><circle cx="472" cy="135" r="8.49"/><circle cx="196" cy="81" r="14.49"/><circle cx="126" cy="119" r="14.49"/><circle cx="10" cy="106" r="10.49"/><circle cx="480" cy="106" r="10.49"/><circle cx="229" cy="62" r="8.49"/><circle cx="193" cy="157" r="14.49"/><circle cx="379" cy="321" r="12.49"/><circle cx="379" cy="-9" r="12.49"/><circle cx="310" cy="22" r="13.49"/><circle cx="448" cy="286" r="13.49"/><circle cx="348" cy="299" r="14.49"/><circle cx="56" cy="299" r="10.49"/><circle cx="453" cy="127" r="14.49"/><circle cx="321" cy="90" r="9.49"/><circle cx="112" cy="162" r="15.49"/><circle cx="147" cy="236" r="10.49"/><circle cx="25" cy="84" r="8.49"/><circle cx="457" cy="155" r="14.49"/><circle cx="-13" cy="155" r="14.49"/><circle cx="80" cy="22" r="9.49"/><circle cx="30" cy="294" r="12.49"/><circle cx="30" cy="153" r="13.49"/><circle cx="30" cy="120" r="8.49"/><circle cx="166" cy="92" r="11.49"/><circle cx="202" cy="317" r="13.49"/><circle cx="202" cy="-13" r="13.49"/><circle cx="427" cy="18" r="11.49"/><circle cx="52" cy="61" r="14.49"/><circle cx="401" cy="254" r="15.49"/><circle cx="80" cy="191" r="16.49"/><circle cx="156" cy="192" r="12.49"/><circle cx="262" cy="151" r="15.49"/><circle cx="122" cy="37" r="10.49"/><circle cx="154" cy="161" r="14.49"/><circle cx="103" cy="28" r="9.49"/><circle cx="312" cy="180" r="15.49"/><circle cx="433" cy="69" r="10.49"/><circle cx="15" cy="142" r="10.49"/><circle cx="177" cy="264" r="10.49"/><circle cx="181" cy="39" r="14.49"/><circle cx="266" cy="181" r="11.49"/><circle cx="230" cy="147" r="11.49"/><circle cx="252" cy="83" r="12.49"/><circle cx="164" cy="72" r="10.49"/><circle cx="7" cy="253" r="12.49"/><circle cx="477" cy="253" r="12.49"/><circle cx="316" cy="260" r="15.49"/><circle cx="69" cy="286" r="14.49"/><circle cx="78" cy="47" r="10.49"/><circle cx="71" cy="104" r="8.49"/><circle cx="437" cy="212" r="15.49"/><circle cx="458" cy="53" r="12.49"/><circle cx="-12" cy="53" r="12.49"/><circle cx="351" cy="220" r="10.49"/><circle cx="267" cy="310" r="9.49"/><circle cx="423" cy="83" r="10.49"/><circle cx="97" cy="8" r="15.49"/><circle cx="97" cy="338" r="15.49"/><circle cx="134" cy="97" r="10.49"/><circle cx="134" cy="63" r="9.49"/><circle cx="406" cy="100" r="12.49"/><circle cx="113" cy="213" r="14.49"/><circle cx="19" cy="202" r="13.49"/><circle cx="431" cy="123" r="11.49"/><circle cx="250" cy="317" r="14.49"/><circle cx="250" cy="-13" r="14.49"/><circle cx="383" cy="78" r="8.49"/><circle cx="457" cy="199" r="14.49"/><circle cx="-13" cy="199" r="14.49"/><circle cx="437" cy="265" r="12.49"/><circle cx="314" cy="52" r="8.49"/><circle cx="221" cy="261" r="12.49"/><circle cx="46" cy="127" r="12.49"/><circle cx="343" cy="20" r="8.49"/><circle cx="456" cy="236" r="9.49"/><circle cx="60" cy="116" r="8.49"/><circle cx="112" cy="281" r="13.49"/><circle cx="72" cy="5" r="11.49"/><circle cx="72" cy="335" r="11.49"/><circle cx="246" cy="57" r="9.49"/><circle cx="257" cy="66" r="9.49"/><circle cx="408" cy="38" r="9.49"/><circle cx="231" cy="199" r="12.49"/><circle cx="4" cy="188" r="10.49"/><circle cx="474" cy="188" r="10.49"/><circle cx="270" cy="247" r="9.49"/><circle cx="449" cy="8" r="9.49"/><circle cx="449" cy="338" r="9.49"/><circle cx="90" cy="143" r="11.49"/><circle cx="350" cy="67" r="8.49"/><circle cx="345" cy="153" r="14.49"/><circle cx="371" cy="224" r="8.49"/><circle cx="415" cy="164" r="9.49"/><circle cx="1" cy="69" r="10.49"/><circle cx="471" cy="69" r="10.49"/><circle cx="287" cy="5" r="13.49"/><circle cx="287" cy="335" r="13.49"/><circle cx="29" cy="248" r="14.49"/><circle cx="389" cy="182" r="13.49"/><circle cx="365" cy="237" r="8.49"/><circle cx="279" cy="193" r="10.49"/><circle cx="378" cy="107" r="9.49"/><circle cx="453" cy="69" r="8.49"/><circle cx="299" cy="90" r="9.49"/><circle cx="338" cy="128" r="10.49"/><circle cx="444" cy="304" r="11.49"/><circle cx="277" cy="25" r="9.49"/><circle cx="254" cy="240" r="14.49"/><circle cx="393" cy="90" r="11.49"/><circle cx="254" cy="265" r="10.49"/><circle cx="130" cy="236" r="13.49"/><circle cx="116" cy="143" r="11.49"/><circle cx="7" cy="37" r="10.49"/><circle cx="477" cy="37" r="10.49"/><circle cx="29" cy="46" r="9.49"/><circle cx="394" cy="305" r="13.49"/><circle cx="169" cy="282" r="10.49"/><circle cx="181" cy="204" r="10.49"/><circle cx="13" cy="167" r="12.49"/><circle cx="483" cy="167" r="12.49"/><circle cx="233" cy="124" r="14.49"/><circle cx="442" cy="245" r="9.49"/><circle cx="366" cy="138" r="13.49"/><circle cx="416" cy="216" r="11.49"/><circle cx="408" cy="144" r="11.49"/><circle cx="326" cy="289" r="10.49"/><circle cx="105" cy="255" r="10.49"/><circle cx="156" cy="110" r="8.49"/><circle cx="310" cy="286" r="12.49"/><circle cx="373" cy="281" r="11.49"/><circle cx="462" cy="108" r="9.49"/><circle cx="-8" cy="108" r="9.49"/><circle cx="391" cy="13" r="10.49"/><circle cx="74" cy="65" r="9.49"/><circle cx="209" cy="97" r="12.49"/><circle cx="54" cy="13" r="13.49"/><circle cx="54" cy="343" r="13.49"/><circle cx="238" cy="279" r="9.49"/><circle cx="137" cy="17" r="8.49"/><circle cx="298" cy="58" r="12.49"/><circle cx="179" cy="141" r="11.49"/><circle cx="204" cy="264" r="12.49"/><circle cx="272" cy="279" r="13.49"/><circle cx="130" cy="283" r="8.49"/><circle cx="131" cy="197" r="8.49"/><circle cx="67" cy="89" r="8.49"/><circle cx="171" cy="172" r="9.49"/><circle cx="189" cy="63" r="9.49"/><circle cx="383" cy="214" r="9.49"/><circle cx="87" cy="34" r="8.49"/><circle cx="66" cy="263" r="11.49"/><circle cx="32" cy="174" r="10.49"/><circle cx="462" cy="27" r="10.49"/><circle cx="-8" cy="27" r="10.49"/><circle cx="287" cy="116" r="10.49"/><circle cx="135" cy="322" r="9.49"/><circle cx="135" cy="-8" r="9.49"/><circle cx="419" cy="198" r="9.49"/><circle cx="450" cy="322" r="9.49"/><circle cx="450" cy="-8" r="9.49"/><circle cx="297" cy="247" r="9.49"/><circle cx="426" cy="140" r="9.49"/><circle cx="28" cy="227" r="9.49"/><circle cx="192" cy="249" r="9.49"/><circle cx="213" cy="154" r="9.49"/><circle cx="350" cy="238" r="9.49"/><circle cx="127" cy="81" r="9.49"/><circle cx="40" cy="78" r="9.49"/><circle cx="261" cy="28" r="9.49"/><circle cx="56" cy="211" r="9.49"/><circle cx="1" cy="236" r="9.49"/><circle cx="471" cy="236" r="9.49"/><circle cx="328" cy="142" r="9.49"/><circle cx="265" cy="125" r="9.49"/><circle cx="12" cy="293" r="9.49"/><circle cx="305" cy="318" r="9.49"/><circle cx="26" cy="313" r="9.49"/><circle cx="324" cy="42" r="9.49"/><circle cx="30" cy="268" r="8.49"/><circle cx="79" cy="213" r="8.49"/><circle cx="444" cy="23" r="8.49"/><circle cx="93" cy="209" r="8.49"/><circle cx="13" cy="20" r="8.49"/><circle cx="49" cy="321" r="8.49"/><circle cx="49" cy="-9" r="8.49"/><circle cx="407" cy="80" r="8.49"/><circle cx="150" cy="97" r="8.49"/><circle cx="181" cy="293" r="8.49"/><circle cx="218" cy="81" r="8.49"/><circle cx="146" cy="290" r="8.49"/><circle cx="119" cy="316" r="8.49"/><circle cx="55" cy="81" r="8.49"/><circle cx="230" cy="181" r="8.49"/><circle cx="117" cy="22" r="8.49"/><circle cx="217" cy="113" r="8.49"/><circle cx="310" cy="304" r="8.49"/><circle cx="246" cy="109" r="8.49"/><circle cx="60" cy="184" r="8.49"/><circle cx="333" cy="182" r="8.49"/><circle cx="78" cy="116" r="8.49"/><circle cx="372" cy="189" r="8.49"/><circle cx="131" cy="154" r="8.49"/><circle cx="413" cy="304" r="8.49"/><circle cx="328" cy="66" r="8.49"/><circle cx="338" cy="33" r="8.49"/><circle cx="152" cy="57" r="8.49"/><circle cx="86" cy="321" r="8.49"/><circle cx="198" cy="111" r="8.49"/><circle cx="159" cy="13" r="8.49"/><circle cx="467" cy="284" r="8.49"/><circle cx="-3" cy="284" r="8.49"/><circle cx="353" cy="11" r="8.49"/><circle cx="340" cy="249" r="8.49"/><circle cx="102" cy="61" r="8.49"/><circle cx="441" cy="110" r="8.49"/><circle cx="62" cy="45" r="8.49"/><circle cx="285" cy="239" r="8.49"/><circle cx="173" cy="157" r="8.49"/><circle cx="68" cy="173" r="8.49"/><circle cx="232" cy="28" r="8.49"/><circle cx="199" cy="47" r="8.49"/><circle cx="98" cy="242" r="7.49"/><circle cx="2" cy="211" r="7.49"/><circle cx="472" cy="211" r="7.49"/><circle cx="309" cy="40" r="7.49"/><circle cx="86" cy="106" r="7.49"/><circle cx="301" cy="75" r="7.49"/><circle cx="89" cy="58" r="7.49"/><circle cx="235" cy="47" r="7.49"/><circle cx="127" cy="270" r="7.49"/><circle cx="421" cy="33" r="7.49"/><circle cx="210" cy="231" r="7.49"/><circle cx="131" cy="137" r="7.49"/><circle cx="290" cy="100" r="7.49"/><circle cx="277" cy="320" r="7.49"/><circle cx="242" cy="186" r="7.49"/><circle cx="173" cy="190" r="7.49"/><circle cx="186" cy="116" r="7.49"/><circle cx="239" cy="265" r="7.49"/><circle cx="195" cy="201" r="7.49"/><circle cx="156" cy="40" r="7.49"/><circle cx="198" cy="4" r="7.49"/><circle cx="198" cy="334" r="7.49"/><circle cx="383" cy="199" r="7.49"/><circle cx="301" cy="164" r="7.49"/><circle cx="295" cy="217" r="7.49"/><circle cx="245" cy="141" r="7.49"/><circle cx="429" cy="299" r="7.49"/><circle cx="130" cy="50" r="7.49"/><circle cx="50" cy="260" r="7.49"/><circle cx="225" cy="92" r="7.49"/><circle cx="406" cy="174" r="7.49"/><circle cx="46" cy="289" r="7.49"/><circle cx="268" cy="203" r="7.49"/><circle cx="162" cy="261" r="7.49"/><circle cx="350" cy="101" r="7.49"/><circle cx="389" cy="67" r="7.49"/><circle cx="378" cy="266" r="7.49"/><circle cx="273" cy="297" r="7.49"/><circle cx="174" cy="105" r="7.49"/><circle cx="74" cy="78" r="7.49"/><circle cx="327" cy="193" r="7.49"/><circle cx="143" cy="202" r="7.49"/><circle cx="392" cy="108" r="7.49"/><circle cx="144" cy="108" r="7.49"/><circle cx="176" cy="64" r="7.49"/><circle cx="243" cy="97" r="7.49"/><circle cx="14" cy="306" r="7.49"/><circle cx="460" cy="79" r="7.49"/><circle cx="223" cy="245" r="7.49"/><circle cx="381" cy="231" r="6.49"/><circle cx="444" cy="61" r="6.49"/><circle cx="310" cy="82" r="6.49"/><circle cx="149" cy="20" r="6.49"/><circle cx="310" cy="242" r="6.49"/><circle cx="311" cy="220" r="6.49"/><circle cx="357" cy="56" r="6.49"/><circle cx="67" cy="247" r="6.49"/><circle cx="14" cy="237" r="6.49"/><circle cx="5" cy="153" r="6.49"/><circle cx="475" cy="153" r="6.49"/><circle cx="210" cy="2" r="6.49"/><circle cx="210" cy="332" r="6.49"/><circle cx="436" cy="6" r="6.49"/><circle cx="436" cy="336" r="6.49"/><circle cx="267" cy="261" r="6.49"/><circle cx="80" cy="132" r="6.49"/><circle cx="368" cy="2" r="6.49"/><circle cx="368" cy="332" r="6.49"/><circle cx="325" cy="15" r="6.49"/><circle cx="199" cy="35" r="6.49"/><circle cx="320" cy="77" r="6.49"/><circle cx="286" cy="90" r="6.49"/><circle cx="432" cy="280" r="6.49"/><circle cx="196" cy="140" r="6.49"/><circle cx="222" cy="7" r="6.49"/><circle cx="222" cy="337" r="6.49"/><circle cx="393" cy="146" r="6.49"/><circle cx="148" cy="304" r="6.49"/><circle cx="286" cy="142" r="6.49"/><circle cx="418" cy="46" r="6.49"/><circle cx="82" cy="234" r="6.49"/><circle cx="254" cy="47" r="6.49"/><circle cx="243" cy="153" r="6.49"/><circle cx="243" cy="69" r="6.49"/><circle cx="108" cy="323" r="6.49"/><circle cx="108" cy="-7" r="6.49"/><circle cx="361" cy="70" r="6.49"/><circle cx="463" cy="95" r="6.49"/><circle cx="-7" cy="95" r="6.49"/><circle cx="463" cy="246" r="6.49"/><circle cx="75" cy="34" r="6.49"/><circle cx="15" cy="73" r="6.49"/><circle cx="150" cy="178" r="6.49"/><circle cx="19" cy="116" r="6.49"/><circle cx="361" cy="311" r="6.49"/><circle cx="288" cy="225" r="6.49"/><circle cx="50" cy="35" r="6.49"/><circle cx="424" cy="59" r="6.49"/><circle cx="349" cy="136" r="6.49"/><circle cx="48" cy="222" r="6.49"/><circle cx="405" cy="293" r="6.49"/><circle cx="141" cy="190" r="6.49"/><circle cx="358" cy="284" r="6.49"/><circle cx="446" cy="169" r="6.49"/><circle cx="252" cy="182" r="6.49"/><circle cx="396" cy="75" r="6.49"/><circle cx="81" cy="266" r="6.49"/><circle cx="344" cy="4" r="6.49"/><circle cx="344" cy="334" r="6.49"/><circle cx="468" cy="224" r="6.49"/><circle cx="-2" cy="224" r="6.49"/><circle cx="398" cy="24" r="6.49"/><circle cx="40" cy="261" r="6.49"/><circle cx="204" cy="194" r="6.49"/><circle cx="373" cy="119" r="6.49"/><circle cx="64" cy="74" r="6.49"/><circle cx="42" cy="142" r="6.49"/><circle cx="292" cy="193" r="6.49"/><circle cx="171" cy="300" r="6.49"/><circle cx="240" cy="211" r="6.49"/><circle cx="93" cy="261" r="6.49"/><circle cx="213" cy="221" r="6.49"/><circle cx="205" cy="170" r="6.49"/><circle cx="451" cy="224" r="6.49"/><circle cx="403" cy="115" r="6.49"/><circle cx="230" cy="162" r="6.49"/><circle cx="175" cy="22" r="6.49"/><circle cx="180" cy="94" r="6.49"/><circle cx="320" cy="7" r="5.49"/><circle cx="259" cy="169" r="5.49"/><circle cx="234" cy="322" r="5.49"/><circle cx="58" cy="195" r="5.49"/><circle cx="128" cy="25" r="5.49"/><circle cx="379" cy="6" r="5.49"/><circle cx="379" cy="336" r="5.49"/><circle cx="27" cy="279" r="5.49"/><circle cx="392" cy="329" r="5.49"/><circle cx="392" cy="-1" r="5.49"/><circle cx="227" cy="275" r="5.49"/><circle cx="360" cy="194" r="5.49"/><circle cx="19" cy="125" r="5.49"/><circle cx="295" cy="149" r="5.49"/><circle cx="426" cy="226" r="5.49"/><circle cx="98" cy="199" r="5.49"/><circle cx="27" cy="187" r="5.49"/><circle cx="441" cy="194" r="5.49"/><circle cx="354" cy="207" r="5.49"/><circle cx="354" cy="23" r="5.49"/><circle cx="160" cy="177" r="5.49"/><circle cx="254" cy="117" r="5.49"/><circle cx="207" cy="117" r="5.49"/><circle cx="322" cy="277" r="5.49"/><circle cx="324" cy="56" r="5.49"/><circle cx="88" cy="289" r="5.49"/><circle cx="267" cy="323" r="5.49"/><circle cx="447" cy="185" r="5.49"/><circle cx="420" cy="152" r="5.49"/><circle cx="294" cy="19" r="5.49"/><circle cx="277" cy="142" r="5.49"/><circle cx="68" cy="212" r="5.49"/><circle cx="435" cy="30" r="5.49"/><circle cx="184" cy="128" r="5.49"/><circle cx="373" cy="178" r="5.49"/><circle cx="390" cy="57" r="5.49"/><circle cx="269" cy="168" r="5.49"/><circle cx="18" cy="92" r="5.49"/><circle cx="168" cy="202" r="5.49"/><circle cx="432" cy="289" r="5.49"/><circle cx="62" cy="98" r="5.49"/><circle cx="189" cy="261" r="5.49"/><circle cx="122" cy="64" r="5.49"/><circle cx="126" cy="17" r="5.49"/><circle cx="103" cy="268" r="5.49"/><circle cx="420" cy="70" r="5.49"/><circle cx="117" cy="296" r="5.49"/><circle cx="2" cy="49" r="5.49"/><circle cx="472" cy="49" r="5.49"/><circle cx="17" cy="46" r="5.49"/><circle cx="410" cy="277" r="5.49"/><circle cx="421" cy="5" r="5.49"/><circle cx="421" cy="335" r="5.49"/><circle cx="235" cy="92" r="5.49"/><circle cx="216" cy="195" r="5.49"/><circle cx="67" cy="54" r="5.49"/><circle cx="363" cy="291" r="5.49"/><circle cx="413" cy="113" r="5.49"/><circle cx="40" cy="225" r="5.49"/><circle cx="58" cy="328" r="5.49"/><circle cx="58" cy="-2" r="5.49"/><circle cx="465" cy="39" r="5.49"/><circle cx="-5" cy="39" r="5.49"/><circle cx="90" cy="237" r="5.49"/><circle cx="460" cy="276" r="5.49"/><circle cx="80" cy="153" r="5.49"/><circle cx="284" cy="289" r="5.49"/><circle cx="4" cy="25" r="5.49"/><circle cx="474" cy="25" r="5.49"/><circle cx="222" cy="212" r="5.49"/><circle cx="82" cy="310" r="5.49"/><circle cx="143" cy="312" r="5.49"/><circle cx="58" cy="274" r="5.49"/><circle cx="369" cy="262" r="5.49"/><circle cx="113" cy="265" r="5.49"/><circle cx="224" cy="71" r="5.49"/><circle cx="180" cy="55" r="5.49"/><circle cx="454" cy="247" r="5.49"/><circle cx="92" cy="25" r="5.49"/><circle cx="110" cy="37" r="5.49"/><circle cx="105" cy="78" r="5.49"/><circle cx="336" cy="172" r="5.49"/><circle cx="69" cy="18" r="5.49"/><circle cx="334" cy="15" r="5.49"/><circle cx="136" cy="274" r="5.49"/><circle cx="468" cy="167" r="5.49"/><circle cx="-2" cy="167" r="5.49"/><circle cx="318" cy="215" r="5.49"/><circle cx="381" cy="96" r="5.49"/><circle cx="-0" cy="145" r="5.49"/><circle cx="470" cy="145" r="5.49"/><circle cx="234" cy="38" r="5.49"/><circle cx="366" cy="106" r="5.49"/><circle cx="165" cy="270" r="5.49"/><circle cx="3" cy="321" r="5.49"/><circle cx="473" cy="321" r="5.49"/><circle cx="261" cy="255" r="5.49"/><circle cx="103" cy="147" r="5.49"/><circle cx="96" cy="155" r="5.49"/><circle cx="226" cy="19" r="5.49"/><circle cx="294" cy="321" r="5.49"/><circle cx="53" cy="311" r="5.49"/><circle cx="35" cy="280" r="5.49"/><circle cx="227" cy="283" r="5.49"/><circle cx="194" cy="12" r="5.49"/><circle cx="275" cy="120" r="5.49"/><circle cx="23" cy="217" r="5.49"/><circle cx="13" cy="-0" r="5.49"/><circle cx="13" cy="330" r="5.49"/><circle cx="297" cy="156" r="5.49"/><circle cx="244" cy="204" r="5.49"/><circle cx="316" cy="137" r="5.49"/><circle cx="330" cy="119" r="5.49"/><circle cx="3" cy="202" r="5.49"/><circle cx="473" cy="202" r="5.49"/><circle cx="155" cy="286" r="5.49"/><circle cx="444" cy="75" r="5.49"/><circle cx="48" cy="27" r="5.49"/><circle cx="414" cy="27" r="5.49"/><circle cx="134" cy="7" r="5.49"/><circle cx="352" cy="77" r="5.49"/><circle cx="407" cy="270" r="5.49"/><circle cx="167" cy="183" r="5.49"/><circle cx="319" cy="300" r="5.49"/><circle cx="204" cy="146" r="4.49"/><circle cx="441" cy="329" r="4.49"/><circle cx="441" cy="-1" r="4.49"/><circle cx="350" cy="282" r="4.49"/><circle cx="330" cy="250" r="4.49"/><circle cx="250" cy="24" r="4.49"/><circle cx="370" cy="43" r="4.49"/><circle cx="255" cy="19" r="4.49"/><circle cx="431" cy="196" r="4.49"/><circle cx="299" cy="258" r="4.49"/><circle cx="61" cy="105" r="4.49"/><circle cx="455" cy="17" r="4.49"/><circle cx="383" cy="294" r="4.49"/><circle cx="290" cy="201" r="4.49"/><circle cx="374" cy="74" r="4.49"/><circle cx="183" cy="72" r="4.49"/><circle cx="14" cy="130" r="4.49"/><circle cx="463" cy="140" r="4.49"/><circle cx="287" cy="20" r="4.49"/><circle cx="413" cy="229" r="4.49"/><circle cx="338" cy="67" r="4.49"/><circle cx="370" cy="35" r="4.49"/><circle cx="323" cy="116" r="4.49"/><circle cx="157" cy="253" r="4.49"/><circle cx="98" cy="287" r="4.49"/><circle cx="159" cy="233" r="4.49"/><circle cx="461" cy="322" r="4.49"/><circle cx="143" cy="90" r="4.49"/><circle cx="195" cy="97" r="4.49"/><circle cx="170" cy="228" r="4.49"/><circle cx="125" cy="70" r="4.49"/><circle cx="76" cy="272" r="4.49"/><circle cx="258" cy="54" r="4.49"/><circle cx="366" cy="317" r="4.49"/><circle cx="155" cy="247" r="4.49"/><circle cx="53" cy="283" r="4.49"/><circle cx="387" cy="263" r="4.49"/><circle cx="165" cy="105" r="4.49"/><circle cx="165" cy="38" r="4.49"/><circle cx="294" cy="80" r="4.49"/><circle cx="98" cy="233" r="4.49"/><circle cx="197" cy="286" r="4.49"/><circle cx="223" cy="158" r="4.49"/><circle cx="190" cy="52" r="4.49"/><circle cx="361" cy="227" r="4.49"/><circle cx="398" cy="3" r="4.49"/><circle cx="398" cy="333" r="4.49"/><circle cx="270" cy="136" r="4.49"/><circle cx="451" cy="110" r="4.49"/><circle cx="415" cy="1" r="4.49"/><circle cx="415" cy="331" r="4.49"/><circle cx="348" cy="255" r="4.49"/><circle cx="301" cy="45" r="4.49"/><circle cx="187" cy="320" r="4.49"/><circle cx="297" cy="290" r="4.49"/><circle cx="209" cy="296" r="4.49"/><circle cx="103" cy="140" r="4.49"/><circle cx="467" cy="118" r="4.49"/><circle cx="-3" cy="118" r="4.49"/><circle cx="22" cy="262" r="4.49"/><circle cx="174" cy="214" r="4.49"/><circle cx="270" cy="212" r="4.49"/><circle cx="263" cy="75" r="4.49"/><circle cx="96" cy="182" r="4.49"/><circle cx="466" cy="273" r="4.49"/><circle cx="-4" cy="273" r="4.49"/><circle cx="405" cy="27" r="4.49"/><circle cx="338" cy="286" r="4.49"/><circle cx="415" cy="74" r="4.49"/><circle cx="78" cy="140" r="4.49"/><circle cx="384" cy="22" r="4.49"/><circle cx="266" cy="83" r="4.49"/><circle cx="140" cy="282" r="4.49"/><circle cx="340" cy="117" r="4.49"/><circle cx="105" cy="71" r="4.49"/><circle cx="1" cy="175" r="4.49"/><circle cx="471" cy="175" r="4.49"/><circle cx="344" cy="211" r="4.49"/><circle cx="460" cy="226" r="4.49"/><circle cx="275" cy="172" r="4.49"/><circle cx="0" cy="99" r="4.49"/><circle cx="470" cy="99" r="4.49"/><circle cx="312" cy="124" r="4.49"/><circle cx="207" cy="303" r="4.49"/><circle cx="115" cy="130" r="4.49"/><circle cx="42" cy="21" r="4.49"/><circle cx="430" cy="93" r="4.49"/><circle cx="440" cy="14" r="4.49"/><circle cx="286" cy="320" r="4.49"/><circle cx="413" cy="180" r="4.49"/><circle cx="217" cy="238" r="4.49"/><circle cx="363" cy="218" r="4.49"/><circle cx="154" cy="88" r="4.49"/><circle cx="190" cy="290" r="4.49"/><circle cx="358" cy="104" r="4.49"/><circle cx="461" cy="88" r="4.49"/><circle cx="221" cy="104" r="4.49"/><circle cx="258" cy="39" r="4.49"/><circle cx="413" cy="88" r="4.49"/></g></pattern>
<radialGradient id="fgL" gradientUnits="userSpaceOnUse" cx="0" cy="0" r="1.3" gradientTransform="matrix(930 0 0 450 700 0)"><stop offset="0" stop-color="#000"/><stop offset=".765" stop-color="#000"/><stop offset=".8" stop-color="#fff"/></radialGradient>
<radialGradient id="fgG" gradientUnits="userSpaceOnUse" cx="0" cy="0" r="1.6" gradientTransform="matrix(930 0 0 450 700 0)"><stop offset="0" stop-color="#000"/><stop offset=".66" stop-color="#000"/><stop offset=".86" stop-color="#fff"/></radialGradient>
<linearGradient id="hvL" gradientUnits="userSpaceOnUse" x1="0" y1="0" x2="1400" y2="0"><stop offset="0" stop-color="#000" stop-opacity=".35"/><stop offset=".15" stop-color="#000" stop-opacity="0"/><stop offset=".74" stop-color="#000" stop-opacity="0"/><stop offset=".9" stop-color="#000" stop-opacity=".3"/><stop offset="1" stop-color="#000" stop-opacity=".45"/></linearGradient>
<linearGradient id="hvG" gradientUnits="userSpaceOnUse" x1="0" y1="0" x2="1400" y2="0"><stop offset="0" stop-color="#000" stop-opacity=".4"/><stop offset=".1" stop-color="#000" stop-opacity="0"/><stop offset=".72" stop-color="#000" stop-opacity="0"/><stop offset=".88" stop-color="#000" stop-opacity=".45"/><stop offset="1" stop-color="#000" stop-opacity=".75"/></linearGradient>
<mask id="mL" maskUnits="userSpaceOnUse" x="0" y="230" width="1400" height="558"><rect x="0" y="230" width="1400" height="558" fill="url(#tileL)"/></mask>
<mask id="mG" maskUnits="userSpaceOnUse" x="0" y="230" width="1400" height="558"><rect x="0" y="230" width="1400" height="558" fill="url(#tileG)"/></mask>
<mask id="fL" maskUnits="userSpaceOnUse" x="0" y="230" width="1400" height="558"><rect x="0" y="230" width="1400" height="558" fill="url(#fgL)"/><rect x="0" y="230" width="1400" height="558" fill="url(#hvL)"/></mask>
<mask id="fG" maskUnits="userSpaceOnUse" x="0" y="230" width="1400" height="558"><rect x="0" y="230" width="1400" height="558" fill="url(#fgG)"/><rect x="0" y="230" width="1400" height="558" fill="url(#hvG)"/></mask>
</defs>
<g mask="url(#fG)"><rect x="0" y="230" width="1400" height="558" fill="#876527" mask="url(#mG)"/></g>
<g mask="url(#fL)"><rect x="0" y="230" width="1400" height="558" fill="#876527" mask="url(#mL)"/></g>
</svg>
<div id="footer" class="abs"></div>
<div id="topbar" class="abs"></div>
<div class="abs hd" style="left:58.5px;top:11px;font-size:23.5px;color:#f1b032;letter-spacing:.1px;transform:scaleX(1.042);transform-origin:0 0">Centre of African Studies</div>
<div class="abs hd" style="left:903px;top:13px;font-size:23.5px;color:#f8e1c2;letter-spacing:.1px;transform:scaleX(1.046);transform-origin:0 0">Edinburgh Seminar Series -<span style="color:#fff"> Semester 1</span></div>

<div id="card" class="abs">
  <div id="c1" class="abs"></div>
  <div id="c2" class="abs"></div>
  <div id="c3" class="abs"></div>
  <div class="t" style="left:19px;top:16px;font-size:23.3px;line-height:28px;font-weight:700;color:#dcdcdc;letter-spacing:-.25px">Wednesday, 18 October, 3.30-5pm</div>
  <div class="t" style="left:19px;top:47px;font-size:23.5px;line-height:28px;color:#dcdcdc;letter-spacing:-.55px">Hybrid: Online and Lecture Theatre C, 40 George Square</div>
  <div class="t" id="title" style="left:18.5px;top:110px;font-size:53px;line-height:64px;font-weight:700;color:#333;-webkit-text-stroke:.8px #333;transform:scaleX(.906)">African Women in Digital Spaces:</div>
  <div class="t" style="left:18.5px;top:181px;font-size:31.8px;line-height:40px;color:#333;letter-spacing:.4px">Redefining Social Movements on the Continent and in
the Diaspora (Online book launch)</div>
  <svg class="abs" style="left:20px;top:273px" width="106" height="108" viewBox="0 0 106 108"><rect width="106" height="108" rx="5" fill="#fff"/><path transform="translate(2.4,3.2) scale(4.06)" fill="#000" d="M0 0h7v1h-7zM10 0h1v1h-1zM12 0h1v1h-1zM14 0h3v1h-3zM18 0h7v1h-7zM0 1h1v1h-1zM6 1h1v1h-1zM8 1h1v1h-1zM10 1h1v1h-1zM13 1h1v1h-1zM15 1h2v1h-2zM18 1h1v1h-1zM24 1h1v1h-1zM0 2h1v1h-1zM2 2h3v1h-3zM6 2h1v1h-1zM12 2h1v1h-1zM18 2h1v1h-1zM20 2h3v1h-3zM24 2h1v1h-1zM0 3h1v1h-1zM2 3h3v1h-3zM6 3h1v1h-1zM8 3h3v1h-3zM12 3h5v1h-5zM18 3h1v1h-1zM20 3h3v1h-3zM24 3h1v1h-1zM0 4h1v1h-1zM2 4h3v1h-3zM6 4h1v1h-1zM9 4h1v1h-1zM14 4h1v1h-1zM18 4h1v1h-1zM20 4h3v1h-3zM24 4h1v1h-1zM0 5h1v1h-1zM6 5h1v1h-1zM8 5h2v1h-2zM11 5h6v1h-6zM18 5h1v1h-1zM24 5h1v1h-1zM0 6h7v1h-7zM8 6h1v1h-1zM10 6h1v1h-1zM12 6h1v1h-1zM14 6h1v1h-1zM16 6h1v1h-1zM18 6h7v1h-7zM9 7h3v1h-3zM14 7h1v1h-1zM16 7h1v1h-1zM0 8h5v1h-5zM6 8h4v1h-4zM11 8h1v1h-1zM14 8h1v1h-1zM17 8h1v1h-1zM19 8h1v1h-1zM21 8h1v1h-1zM23 8h1v1h-1zM0 9h1v1h-1zM3 9h1v1h-1zM5 9h1v1h-1zM7 9h1v1h-1zM10 9h1v1h-1zM12 9h2v1h-2zM19 9h1v1h-1zM23 9h1v1h-1zM0 10h1v1h-1zM2 10h1v1h-1zM5 10h2v1h-2zM10 10h1v1h-1zM14 10h6v1h-6zM21 10h1v1h-1zM23 10h2v1h-2zM0 11h3v1h-3zM4 11h1v1h-1zM7 11h2v1h-2zM12 11h1v1h-1zM18 11h2v1h-2zM24 11h1v1h-1zM1 12h4v1h-4zM6 12h1v1h-1zM8 12h3v1h-3zM12 12h2v1h-2zM15 12h1v1h-1zM17 12h2v1h-2zM20 12h1v1h-1zM22 12h3v1h-3zM0 13h1v1h-1zM2 13h4v1h-4zM8 13h2v1h-2zM14 13h1v1h-1zM16 13h1v1h-1zM19 13h1v1h-1zM21 13h1v1h-1zM23 13h1v1h-1zM0 14h1v1h-1zM2 14h1v1h-1zM4 14h3v1h-3zM8 14h1v1h-1zM10 14h3v1h-3zM14 14h3v1h-3zM19 14h3v1h-3zM23 14h2v1h-2zM0 15h1v1h-1zM3 15h1v1h-1zM8 15h1v1h-1zM10 15h2v1h-2zM15 15h1v1h-1zM17 15h4v1h-4zM24 15h1v1h-1zM0 16h1v1h-1zM4 16h8v1h-8zM13 16h8v1h-8zM22 16h1v1h-1zM8 17h1v1h-1zM12 17h1v1h-1zM15 17h2v1h-2zM20 17h2v1h-2zM0 18h7v1h-7zM8 18h1v1h-1zM14 18h1v1h-1zM16 18h1v1h-1zM18 18h1v1h-1zM20 18h1v1h-1zM22 18h3v1h-3zM0 19h1v1h-1zM6 19h1v1h-1zM12 19h1v1h-1zM14 19h1v1h-1zM16 19h1v1h-1zM20 19h2v1h-2zM23 19h1v1h-1zM0 20h1v1h-1zM2 20h3v1h-3zM6 20h1v1h-1zM8 20h3v1h-3zM12 20h2v1h-2zM15 20h6v1h-6zM22 20h3v1h-3zM0 21h1v1h-1zM2 21h3v1h-3zM6 21h1v1h-1zM8 21h1v1h-1zM13 21h6v1h-6zM20 21h5v1h-5zM0 22h1v1h-1zM2 22h3v1h-3zM6 22h1v1h-1zM8 22h2v1h-2zM11 22h2v1h-2zM16 22h1v1h-1zM21 22h2v1h-2zM24 22h1v1h-1zM0 23h1v1h-1zM6 23h1v1h-1zM8 23h4v1h-4zM15 23h3v1h-3zM19 23h3v1h-3zM24 23h1v1h-1zM0 24h7v1h-7zM8 24h5v1h-5zM15 24h1v1h-1zM19 24h6v1h-6z"/></svg>
  <div class="t" style="left:143px;top:351px;font-size:25px;line-height:30px;font-weight:700;color:#0b5371;letter-spacing:-.26px">https://edin.ac/3RwL4e8</div>
  <div id="c4"><div class="t" style="left:19px;top:413px;font-size:22px;line-height:31px;color:#3a351c;letter-spacing:.85px"><b>Dr Msia Kibona Clark</b> (Howard University) <b>&amp; Dr Wunpini Fatimata</b>
<b>Mohammed</b> (Grady College)</div>
  <div class="t" style="left:19px;top:488px;font-size:19.6px;line-height:26px;color:#3a351c;letter-spacing:.1px">With <b>Mary Roaf, Nora Enguienta</b> and <b>Patience Labane</b></div></div>
</div>
<svg id="book" class="abs" style="left:934px;top:178px;box-shadow:4px 3px 3px 0 rgba(14,6,4,.92),0 0 3px rgba(14,6,4,.6)" width="261" height="398" viewBox="0 0 261 398"><defs><linearGradient id="gp1" x1="0" y1="0" x2="0" y2="1"><stop offset="0" stop-color="#cfd0d1"/><stop offset=".55" stop-color="#ececec"/><stop offset="1" stop-color="#fbfbfb"/></linearGradient><linearGradient id="gp0" x1="0" y1="0" x2="0" y2="1"><stop offset="0" stop-color="#e3e5e7"/><stop offset="1" stop-color="#cdd0d3"/></linearGradient><linearGradient id="gred" x1="0" y1="0" x2="1" y2="1"><stop offset="0" stop-color="#d21f2a"/><stop offset=".45" stop-color="#8e3a30"/><stop offset="1" stop-color="#6d4a30"/></linearGradient><clipPath id="bkc"><rect width="261" height="398"/></clipPath></defs><g clip-path="url(#bkc)"><rect width="261" height="398" fill="#3a3530"/><polygon points="0.0,217.6 80.5,217.6 80.5,234.5 0.0,238.2" fill="#77786a"/><polygon points="54.3,221.4 74.9,221.4 77.7,232.6 58.0,235.4" fill="#3b2b22"/><polygon points="0.0,237.8 80.5,233.7 82.3,240.1 0.0,243.4" fill="#efefef"/><polygon points="0.0,241.9 56.1,231.6 83.3,262.9 1.9,280.3" fill="#17161a"/><polygon points="39.3,246.6 61.8,242.9 64.6,264.4 44.0,268.1" fill="#e8e8ee"/><polygon points="39.3,246.6 61.8,242.9 62.5,249.4 40.4,253.5" fill="#c8202a"/><polygon points="42.7,257.8 63.6,254.7 64.6,264.4 44.0,268.1" fill="#23358a"/><ellipse cx="72.0" cy="252.2" rx="9" ry="7.5" fill="#e9e9e6"/><ellipse cx="14.0" cy="259.7" rx="5" ry="6" fill="#7a5260"/><polygon points="1.9,280.3 83.3,262.9 85.1,270.4 3.7,290.2" fill="#f1f1f1"/><polygon points="76.7,221.4 131.0,217.6 131.9,226.6 82.3,233.0" fill="#f2f2f2"/><polygon points="82.3,233.0 131.9,226.6 149.7,236.7 103.3,249.4 87.9,262.5 82.3,249.4" fill="#8c9478"/><polygon points="110.4,233.5 131.0,229.8 142.2,236.3 119.8,242.9" fill="#ecebea"/><polygon points="84.2,240.1 104.8,236.3 112.3,245.7 89.8,255.0" fill="#6f8f78"/><polygon points="112.3,227.9 134.7,227.0 138.5,230.7 116.0,234.5" fill="#5a3036"/><polygon points="131.9,217.6 209.6,223.2 210.5,229.2 165.6,240.4 149.7,236.7" fill="#3f4a3c"/><polygon points="153.4,229.8 177.8,227.9 182.4,234.1 159.1,237.3" fill="#4f6f96"/><polygon points="131.0,217.6 142.2,217.6 166.5,240.1 162.8,241.9" fill="#f0f0f0"/><polygon points="165.6,240.4 210.5,229.2 212.4,233.0 169.3,245.3" fill="#f3f3f3"/><polygon points="205.0,224.0 261.0,226.0 261.0,240.0 222.0,243.0" fill="#e9e9e9"/><polygon points="169.3,245.3 231.1,230.3 262.0,252.2 262.0,258.8 198.7,276.9" fill="#8a7038"/><polygon points="192.7,241.9 233.0,234.5 241.4,244.7 201.2,254.1" fill="#2c2a20"/><polygon points="202.1,256.9 243.3,248.5 250.7,258.8 211.5,268.1" fill="#d9d3c4"/><polygon points="177.8,252.2 198.4,249.4 205.8,266.3 194.6,273.8" fill="#4a5a30"/><polygon points="190.9,268.1 211.5,266.3 213.3,275.6 198.7,276.9" fill="#1d1b1a"/><polygon points="198.7,276.9 262.0,258.8 262.0,268.1 201.7,286.5" fill="#f3f3f3"/><polygon points="247.0,264.4 262.0,273.8 262.0,268.1" fill="#dcdcdc"/><polygon points="102.5,249.4 104.8,258.8 131.4,294.7 192.2,276.9 189.4,268.1 157.6,236.3" fill="#f4f4f4"/><polygon points="103.3,249.4 157.6,236.3 189.4,268.1 129.5,285.0" fill="url(#gred)"/><polygon points="144.1,241.9 159.1,240.1 174.0,260.7 162.8,266.3" fill="#b0463a"/><polygon points="119.8,268.1 168.4,256.9 185.3,268.1 131.0,283.1" fill="#7a5538"/><polygon points="112.3,256.0 134.7,250.4 138.5,258.8 116.0,265.3" fill="#c8a8b0" opacity=".55"/><polygon points="5.2,289.1 101.0,266.3 112.6,283.5 11.6,305.9" fill="#2a2622"/><polygon points="5.2,289.1 10.0,288.0 16.7,304.8 11.6,305.9" fill="#3d4a2c"/><polygon points="11.2,287.7 16.0,286.5 23.0,303.4 17.9,304.5" fill="#191714"/><polygon points="17.2,286.2 22.0,285.1 29.3,302.0 24.2,303.1" fill="#d8d4c8"/><polygon points="23.2,284.8 28.0,283.7 35.6,300.6 30.5,301.7" fill="#6a1f3a"/><polygon points="29.2,283.4 34.0,282.2 41.9,299.2 36.9,300.3" fill="#23321f"/><polygon points="35.2,282.0 40.0,280.8 48.2,297.8 43.2,298.9" fill="#b8902a"/><polygon points="41.2,280.5 46.0,279.4 54.5,296.4 49.5,297.5" fill="#e6e2d8"/><polygon points="47.2,279.1 51.9,278.0 60.9,295.0 55.8,296.1" fill="#15151a"/><polygon points="53.1,277.7 57.9,276.5 67.2,293.6 62.1,294.7" fill="#7f8a90"/><polygon points="59.1,276.3 63.9,275.1 73.5,292.2 68.4,293.3" fill="#3a2a40"/><polygon points="65.1,274.8 69.9,273.7 79.8,290.8 74.8,291.9" fill="#4a5a3a"/><polygon points="71.1,273.4 75.9,272.3 86.1,289.4 81.1,290.5" fill="#1f3a6a"/><polygon points="77.1,272.0 81.9,270.8 92.4,288.0 87.4,289.1" fill="#d0c8b8"/><polygon points="83.1,270.5 87.9,269.4 98.8,286.6 93.7,287.7" fill="#5a6a2a"/><polygon points="89.1,269.1 93.9,268.0 105.1,285.2 100.0,286.3" fill="#402030"/><polygon points="95.1,267.7 99.9,266.6 111.4,283.8 106.3,284.9" fill="#8a7a6a"/><polygon points="104.8,301.8 195.5,277.9 203.0,288.3 101.0,314.5" fill="#3a2c2e"/><polygon points="112.3,299.6 121.1,297.3 128.6,307.4 119.8,309.7" fill="#2d5a34"/><polygon points="122.7,296.9 131.5,294.6 139.0,304.7 130.2,307.0" fill="#4a7a4a"/><polygon points="133.1,294.1 141.9,291.8 149.4,302.1 140.6,304.3" fill="#35302c"/><polygon points="143.5,291.4 152.3,289.1 159.8,299.4 151.0,301.7" fill="#6a4450"/><polygon points="153.9,288.7 162.8,286.4 170.2,296.7 161.4,299.0" fill="#7a5560"/><polygon points="164.3,286.0 173.2,283.7 180.7,294.1 171.8,296.3" fill="#4a3038"/><polygon points="174.7,283.3 183.6,281.0 191.1,291.4 182.2,293.7" fill="#8a6a70"/><polygon points="185.1,280.6 194.0,278.3 201.5,288.7 192.6,291.0" fill="#3a2428"/><polygon points="0.0,290.6 5.2,289.1 11.6,305.9 14.0,316.8 0.0,324.3" fill="#ececec"/><polygon points="0.0,299.9 8.4,299.9 13.1,335.5 0.0,341.1" fill="#9aa08a"/><polygon points="0.0,316.8 7.5,315.9 11.2,331.8 0.0,335.5" fill="#c99a9a"/><polygon points="11.6,305.6 112.6,283.5 123.9,299.9 19.6,337.0" fill="#f6f6f6"/><ellipse cx="26.6" cy="308.7" rx="12.5" ry="9.5" fill="#d9d9d9"/><ellipse cx="26.6" cy="311.2" rx="11" ry="6.5" fill="#2fa866"/><ellipse cx="25.6" cy="306.2" rx="4.6" ry="4.4" fill="#8a5a44"/><rect x="99.4" y="285.3" width="13" height="6" rx="3" fill="#111" transform="rotate(-13 105.9 288.3)"/><line x1="17.8" y1="325.2" x2="50.5" y2="315.9" stroke="#222" stroke-width="1.6" opacity=".8"/><line x1="17.8" y1="329.0" x2="28.1" y2="326.1" stroke="#888" stroke-width="1" opacity=".8"/><line x1="18.7" y1="333.3" x2="97.3" y2="313.0" stroke="#5a9fd0" stroke-width="1.2" opacity=".8"/><line x1="18.7" y1="335.5" x2="89.8" y2="317.7" stroke="#8ab8d8" stroke-width="1" opacity=".8"/><polygon points="0.0,334.7 13.5,337.2 25.6,389.9 25.6,398.4 0.0,398.4" fill="#14120e"/><polygon points="3.4,365.6 16.1,364.3 9.4,382.8" fill="#e7d43a"/><polygon points="0.0,351.0 7.5,348.8 15.3,358.1 16.1,363.0 0.0,364.1" fill="#d8c432"/><polygon points="0.0,355.3 13.1,358.1 13.1,360.4 0.0,358.1" fill="#14120e"/><polygon points="0.0,391.4 25.6,389.9 29.9,398.4 0.0,398.4" fill="#e9e9e9"/><polygon points="13.5,337.2 19.1,336.2 35.9,398.4 25.6,398.4 25.6,389.9" fill="#e2e2e2"/><polygon points="19.1,336.2 97.7,313.6 125.0,371.6 62.1,397.1 35.9,398.4" fill="#2a1d16"/><polygon points="46.8,328.6 97.7,313.6 114.1,346.9 87.9,351.6 56.1,358.1" fill="#9c8d4a"/><polygon points="87.9,317.0 97.7,313.6 104.8,328.2 93.6,331.9" fill="#d8cfa0"/><polygon points="77.7,376.9 110.4,347.8 125.0,371.6 87.9,385.3" fill="#7d4422"/><polygon points="89.8,363.8 112.3,350.7 125.0,371.6 104.8,380.6" fill="#a0582c"/><ellipse cx="74.5" cy="366.6" rx="19" ry="27" fill="#1b2132" transform="rotate(-8 74.5 366.6)"/><ellipse cx="65.9" cy="333.4" rx="8" ry="9.5" fill="#a37456"/><ellipse cx="64.4" cy="327.4" rx="8.5" ry="5.5" fill="#1a1410"/><polygon points="49.0,348.8 56.1,344.1 61.8,348.8 56.1,363.8 49.6,365.6" fill="#a87858"/><line x1="82.3" y1="336.8" x2="105.7" y2="336.8" stroke="#15120f" stroke-width="1.6"/><polygon points="61.8,389.9 71.1,384.3 74.9,395.6 62.7,397.1" fill="#c2402a"/><line x1="28.1" y1="348.8" x2="46.8" y2="344.1" stroke="#5a4a3a" stroke-width="1"/><line x1="29.9" y1="359.1" x2="48.7" y2="354.4" stroke="#5a4a3a" stroke-width="1"/><line x1="31.8" y1="369.4" x2="50.5" y2="364.7" stroke="#5a4a3a" stroke-width="1"/><line x1="33.7" y1="379.7" x2="52.4" y2="375.0" stroke="#5a4a3a" stroke-width="1"/><line x1="35.6" y1="389.9" x2="54.3" y2="385.3" stroke="#5a4a3a" stroke-width="1"/><polygon points="62.1,397.1 125.0,371.6 128.0,379.1 83.3,398.4 63.6,398.4" fill="#ededed"/><polygon points="83.3,398.4 164.7,365.6 186.2,398.4" fill="#161112"/><ellipse cx="138.8" cy="385.8" rx="7" ry="8" fill="#b8785a"/><ellipse cx="150.8" cy="388.8" rx="14" ry="11" fill="#3a1c18"/><ellipse cx="137.8" cy="385.8" rx="6.5" ry="7.5" fill="#c08462"/><polygon points="164.7,393.7 179.6,389.9 186.2,398.4 160.9,398.4" fill="#b02a30"/><polygon points="116.0,391.8 129.1,389.0 131.0,395.6 117.9,397.4" fill="#9a6a58"/><polygon points="164.7,364.1 219.3,341.7 262.0,363.8 262.0,398.4 186.2,398.4" fill="#e9e9e9"/><polygon points="177.4,372.2 217.1,345.4 245.5,370.9 213.3,396.5" fill="#1f1f22"/><polygon points="181.1,373.1 215.6,349.9 240.5,371.6 212.4,392.2" fill="#c7ac74"/><polygon points="181.1,373.1 198.4,361.5 215.2,389.9 212.4,392.2" fill="#dcd3bd"/><polygon points="204.0,353.5 215.6,349.9 240.5,371.6 232.0,375.9" fill="#e6e1d5"/><polygon points="196.5,367.5 209.6,366.6 221.7,380.6 207.7,382.5" fill="#b98a4a"/><polygon points="213.3,396.5 245.5,370.9 262.0,376.5 262.0,398.4 221.7,398.4" fill="#a4a6aa"/><polygon points="228.3,389.9 248.9,376.9 262.0,381.5 262.0,398.4 235.8,398.4" fill="#3c3d42"/><polygon points="241.4,384.3 254.5,379.7 262.0,382.5 262.0,395.6 248.9,393.7" fill="#8d5b42"/><polygon points="96.9,305.7 208.1,282.9 237.3,326.0 238.0,335.3 130.4,377.2 128.0,366.6 96.4,315.1" fill="#e3e3e3"/><polygon points="98.1,305.4 208.1,282.9 237.3,326.0 129.1,366.0" fill="#fbfbfb"/><ellipse cx="119.8" cy="315.1" rx="14.5" ry="12" fill="#e8e8e8"/><ellipse cx="119.8" cy="315.1" rx="13.3" ry="10.8" fill="#8a9a86"/><ellipse cx="121.8" cy="319.1" rx="8" ry="5" fill="#c9c4c0"/><ellipse cx="116.8" cy="310.1" rx="8" ry="4.5" fill="#4a6a48"/><rect x="193.2" y="289.4" width="14" height="7.2" rx="3.6" fill="#111" transform="rotate(-12 200.2 293.0)"/><line x1="118.3" y1="337.9" x2="169.3" y2="322.6" stroke="#1c1c1c" stroke-width="2" opacity=".85"/><line x1="173.1" y1="321.5" x2="175.0" y2="320.9" stroke="#3a9ad8" stroke-width="2" opacity=".85"/><line x1="119.8" y1="342.8" x2="134.7" y2="338.7" stroke="#8a8a8a" stroke-width="1.2" opacity=".85"/><line x1="125.7" y1="351.0" x2="159.1" y2="340.9" stroke="#444" stroke-width="1.4" opacity=".85"/><line x1="160.0" y1="340.5" x2="180.6" y2="334.2" stroke="#4aa3de" stroke-width="1.4" opacity=".85"/><line x1="127.2" y1="356.3" x2="144.1" y2="351.0" stroke="#333" stroke-width="1.4" opacity=".85"/><line x1="131.0" y1="361.5" x2="172.2" y2="348.4" stroke="#4aa3de" stroke-width="1.4" opacity=".85"/><polygon points="205.5,286.5 250.7,273.8 262.0,281.6 262.0,306.5 233.0,316.8" fill="#8f706c"/><polygon points="205.5,286.5 250.7,273.8 262.0,281.6 262.0,286.9 220.8,299.9" fill="#77605c"/><polygon points="236.7,290.6 259.2,285.9 262.0,299.9 241.4,309.3" fill="#e88a80"/><ellipse cx="237.6" cy="282.2" rx="5.5" ry="5" fill="#6a4030"/><polygon points="227.4,307.4 241.4,305.6 243.3,313.0 233.0,316.8" fill="#b07050"/><polygon points="233.9,317.3 262.0,306.1 262.0,317.0 238.8,328.6" fill="#141414"/><circle cx="242.3" cy="318.5" r=".9" fill="#ddd"/><circle cx="248.3" cy="316.0" r=".9" fill="#ddd"/><circle cx="254.3" cy="313.6" r=".9" fill="#ddd"/><circle cx="260.3" cy="311.2" r=".9" fill="#ddd"/><polygon points="238.8,328.6 262.0,317.0 262.0,356.6 241.8,340.4" fill="#ededed"/><polygon points="241.8,340.4 262.0,356.6 262.0,363.8 243.3,348.8" fill="#d2d2d2"/><polygon points="249.8,324.5 262.0,319.2 262.0,338.5 252.6,334.2" fill="#3d8fc8"/><polygon points="251.7,330.1 262.0,327.3 262.0,333.8 253.0,334.2" fill="#7a4a8a"/><polygon points="0,180 261,180 261.0,230.0 259.5,230.5 256.2,229.0 253.4,230.5 250.7,229.1 246.5,229.6 244.3,230.0 241.2,228.7 237.4,228.7 234.4,228.3 231.4,228.4 228.1,227.0 223.3,227.4 221.0,225.4 216.8,226.5 213.7,225.8 210.3,225.0 208.1,224.6 204.2,222.2 200.5,222.5 198.4,222.4 194.8,222.8 191.9,220.3 187.8,220.2 184.2,221.2 180.4,220.0 176.6,219.9 173.1,219.2 169.9,220.1 165.1,218.3 160.6,217.3 158.1,218.6 154.8,217.3 152.6,218.2 150.3,217.3 145.4,217.5 140.6,218.1 137.6,217.5 135.3,217.1 133.1,217.6 128.9,216.1 126.3,216.6 122.0,216.0 117.1,218.4 114.8,217.1 111.1,218.7 108.4,218.6 104.8,219.4 100.0,219.6 97.4,219.3 92.5,220.1 87.8,219.9 83.2,220.0 79.4,219.6 76.3,220.2 73.3,220.7 70.0,221.8 67.3,219.7 64.9,221.8 60.2,220.9 55.9,221.0 51.2,222.0 46.6,222.3 43.2,222.8 41.0,221.5 37.3,222.8 35.0,222.7 30.8,222.3 26.3,222.4 23.7,222.4 20.3,222.8 16.9,223.1 14.1,221.1 9.7,220.3 7.4,221.8 3.6,221.1 0.0,220.6" fill="url(#gp1)"/><rect width="261" height="28" fill="url(#gp0)"/><polygon points="0.0,15.5 3.6,16.0 7.6,16.0 11.7,14.9 14.6,16.7 17.9,16.7 20.0,16.1 22.4,16.3 25.6,15.4 27.9,15.7 31.9,16.3 34.1,16.2 36.2,15.8 38.3,14.5 42.2,14.6 44.5,15.9 48.4,14.4 52.5,14.5 55.9,13.9 60.0,14.8 64.1,15.2 66.6,14.3 68.8,13.9 70.8,14.2 74.0,13.7 77.5,14.4 80.0,15.2 83.0,14.4 85.9,14.9 87.9,15.3 89.7,14.8 93.5,13.3 97.2,13.8 100.4,13.0 102.3,13.2 106.4,13.1 110.0,14.2 114.1,12.8 116.8,12.9 120.4,11.7 124.0,12.6 127.9,10.8 131.9,10.5 134.6,11.1 138.6,10.2 142.6,11.2 145.1,11.2 147.4,11.1 149.5,12.6 153.7,12.3 155.6,14.0 158.7,13.5 161.1,14.2 164.9,14.5 167.7,14.2 171.7,14.7 174.7,16.4 176.8,16.5 180.8,16.7 184.5,16.1 187.4,16.5 191.2,17.1 194.1,18.7 197.9,19.0 200.8,18.4 204.4,18.8 206.9,18.9 209.0,19.1 213.2,20.5 216.5,20.0 219.1,19.5 221.6,21.0 225.5,20.7 229.1,21.8 232.6,21.9 236.2,21.6 239.7,21.8 242.7,22.9 246.1,22.4 250.2,23.3 253.4,22.5 256.5,23.2 259.9,23.8 261.0,24.0 261.0,197.8 259.8,198.2 256.2,197.1 253.1,197.6 251.2,198.0 248.1,197.0 245.0,197.5 240.8,195.5 236.7,196.2 232.6,195.9 230.4,195.9 227.3,196.3 225.1,195.7 222.7,197.4 220.7,197.3 218.5,197.4 216.6,196.7 213.6,198.5 210.0,198.2 207.8,198.6 205.0,198.3 201.5,197.7 199.6,198.2 196.5,197.0 194.3,197.9 192.2,197.5 188.1,198.0 185.3,197.2 183.4,196.8 180.1,198.6 176.1,196.9 171.9,196.5 169.5,198.0 167.3,197.6 164.6,197.9 161.9,196.9 157.8,196.4 155.0,197.4 152.6,197.4 149.6,197.7 145.9,196.2 142.2,196.5 138.9,196.6 136.3,197.4 134.0,197.4 131.4,198.2 129.6,197.9 125.4,197.8 122.5,198.6 118.7,198.6 116.7,199.8 113.4,200.0 110.8,199.2 107.5,200.0 103.4,201.6 101.3,202.4 97.1,200.9 95.0,201.3 91.8,199.8 87.7,200.4 85.5,200.1 83.5,199.9 80.8,199.2 76.7,198.8 74.7,197.6 71.6,197.3 69.8,197.3 65.9,197.7 63.8,197.5 61.7,197.9 58.9,195.9 55.9,196.3 54.0,197.1 50.1,195.4 46.3,195.2 44.0,194.9 42.0,195.1 38.5,195.1 36.0,193.5 32.4,193.3 28.7,193.0 24.7,192.1 22.6,191.1 20.5,191.7 17.6,191.1 14.9,189.2 11.6,190.0 9.6,190.6 6.6,188.6 2.7,188.6 0.0,189.1" fill="#b9b9b9" opacity=".7"/><polygon points="0.0,14.7 3.6,15.2 7.6,15.2 11.7,14.1 14.6,15.9 17.9,15.9 20.0,15.3 22.4,15.5 25.6,14.6 27.9,14.9 31.9,15.5 34.1,15.4 36.2,15.0 38.3,13.7 42.2,13.8 44.5,15.1 48.4,13.6 52.5,13.7 55.9,13.1 60.0,14.0 64.1,14.4 66.6,13.5 68.8,13.1 70.8,13.4 74.0,12.9 77.5,13.6 80.0,14.4 83.0,13.6 85.9,14.1 87.9,14.5 89.7,14.0 93.5,12.5 97.2,13.0 100.4,12.2 102.3,12.4 106.4,12.3 110.0,13.4 114.1,12.0 116.8,12.1 120.4,10.9 124.0,11.8 127.9,10.0 131.9,9.7 134.6,10.3 138.6,9.4 142.6,10.4 145.1,10.4 147.4,10.3 149.5,11.8 153.7,11.5 155.6,13.2 158.7,12.7 161.1,13.4 164.9,13.7 167.7,13.4 171.7,13.9 174.7,15.6 176.8,15.7 180.8,15.9 184.5,15.3 187.4,15.7 191.2,16.3 194.1,17.9 197.9,18.2 200.8,17.6 204.4,18.0 206.9,18.1 209.0,18.3 213.2,19.7 216.5,19.2 219.1,18.7 221.6,20.2 225.5,19.9 229.1,21.0 232.6,21.1 236.2,20.8 239.7,21.0 242.7,22.1 246.1,21.6 250.2,22.5 253.4,21.7 256.5,22.4 259.9,23.0 261.0,23.2 261.0,196.2 259.8,196.6 256.2,195.5 253.1,196.0 251.2,196.4 248.1,195.4 245.0,195.9 240.8,193.9 236.7,194.6 232.6,194.3 230.4,194.3 227.3,194.7 225.1,194.1 222.7,195.8 220.7,195.7 218.5,195.8 216.6,195.1 213.6,196.9 210.0,196.6 207.8,197.0 205.0,196.7 201.5,196.1 199.6,196.6 196.5,195.4 194.3,196.3 192.2,195.9 188.1,196.4 185.3,195.6 183.4,195.2 180.1,197.0 176.1,195.3 171.9,194.9 169.5,196.4 167.3,196.0 164.6,196.3 161.9,195.3 157.8,194.8 155.0,195.8 152.6,195.8 149.6,196.1 145.9,194.6 142.2,194.9 138.9,195.0 136.3,195.8 134.0,195.8 131.4,196.6 129.6,196.3 125.4,196.2 122.5,197.0 118.7,197.0 116.7,198.2 113.4,198.4 110.8,197.6 107.5,198.4 103.4,200.0 101.3,200.8 97.1,199.3 95.0,199.7 91.8,198.2 87.7,198.8 85.5,198.5 83.5,198.3 80.8,197.6 76.7,197.2 74.7,196.0 71.6,195.7 69.8,195.7 65.9,196.1 63.8,195.9 61.7,196.3 58.9,194.3 55.9,194.7 54.0,195.5 50.1,193.8 46.3,193.6 44.0,193.3 42.0,193.5 38.5,193.5 36.0,191.9 32.4,191.7 28.7,191.4 24.7,190.5 22.6,189.5 20.5,190.1 17.6,189.5 14.9,187.6 11.6,188.4 9.6,189.0 6.6,187.0 2.7,187.0 0.0,187.5" fill="#c4c6c8"/><polygon points="0.0,15.5 3.6,16.0 7.6,16.0 11.7,14.9 14.6,16.7 17.9,16.7 20.0,16.1 22.4,16.3 25.6,15.4 27.9,15.7 31.9,16.3 34.1,16.2 36.2,15.8 38.3,14.5 42.2,14.6 44.5,15.9 48.4,14.4 52.5,14.5 55.9,13.9 60.0,14.8 64.1,15.2 66.6,14.3 68.8,13.9 70.8,14.2 74.0,13.7 77.5,14.4 80.0,15.2 83.0,14.4 85.9,14.9 87.9,15.3 89.7,14.8 93.5,13.3 97.2,13.8 100.4,13.0 102.3,13.2 106.4,13.1 110.0,14.2 114.1,12.8 116.8,12.9 120.4,11.7 124.0,12.6 127.9,10.8 131.9,10.5 134.6,11.1 138.6,10.2 142.6,11.2 145.1,11.2 147.4,11.1 149.5,12.6 153.7,12.3 155.6,14.0 158.7,13.5 161.1,14.2 164.9,14.5 167.7,14.2 171.7,14.7 174.7,16.4 176.8,16.5 180.8,16.7 184.5,16.1 187.4,16.5 191.2,17.1 194.1,18.7 197.9,19.0 200.8,18.4 204.4,18.8 206.9,18.9 209.0,19.1 213.2,20.5 216.5,20.0 219.1,19.5 221.6,21.0 225.5,20.7 229.1,21.8 232.6,21.9 236.2,21.6 239.7,21.8 242.7,22.9 246.1,22.4 250.2,23.3 253.4,22.5 256.5,23.2 259.9,23.8 261.0,24.0 261.0,196.2 259.8,196.6 256.2,195.5 253.1,196.0 251.2,196.4 248.1,195.4 245.0,195.9 240.8,193.9 236.7,194.6 232.6,194.3 230.4,194.3 227.3,194.7 225.1,194.1 222.7,195.8 220.7,195.7 218.5,195.8 216.6,195.1 213.6,196.9 210.0,196.6 207.8,197.0 205.0,196.7 201.5,196.1 199.6,196.6 196.5,195.4 194.3,196.3 192.2,195.9 188.1,196.4 185.3,195.6 183.4,195.2 180.1,197.0 176.1,195.3 171.9,194.9 169.5,196.4 167.3,196.0 164.6,196.3 161.9,195.3 157.8,194.8 155.0,195.8 152.6,195.8 149.6,196.1 145.9,194.6 142.2,194.9 138.9,195.0 136.3,195.8 134.0,195.8 131.4,196.6 129.6,196.3 125.4,196.2 122.5,197.0 118.7,197.0 116.7,198.2 113.4,198.4 110.8,197.6 107.5,198.4 103.4,200.0 101.3,200.8 97.1,199.3 95.0,199.7 91.8,198.2 87.7,198.8 85.5,198.5 83.5,198.3 80.8,197.6 76.7,197.2 74.7,196.0 71.6,195.7 69.8,195.7 65.9,196.1 63.8,195.9 61.7,196.3 58.9,194.3 55.9,194.7 54.0,195.5 50.1,193.8 46.3,193.6 44.0,193.3 42.0,193.5 38.5,193.5 36.0,191.9 32.4,191.7 28.7,191.4 24.7,190.5 22.6,189.5 20.5,190.1 17.6,189.5 14.9,187.6 11.6,188.4 9.6,189.0 6.6,187.0 2.7,187.0 0.0,187.5" fill="#fff"/><g font-family="Liberation Sans, sans-serif" text-anchor="middle"><text x="129.5" y="35" font-size="8.6" fill="#5d5d5d" textLength="86" lengthAdjust="spacing">Msia Kibona Clark</text><text x="128.6" y="46.8" font-size="8.6" fill="#5d5d5d" textLength="201.6" lengthAdjust="spacing">and Wunpini Fatimata Mohammed (Eds.)</text><g transform="translate(127.9 0) scale(0.66 1)"><text x="0" y="88.4" font-size="29.8" font-weight="700" fill="#e2572b" stroke="#e2572b" stroke-width="1.7" stroke-linejoin="round" textLength="292.5" lengthAdjust="spacing">AFRICAN WOMEN</text></g><g transform="translate(128.8 0) scale(0.66 1)"><text x="0" y="127.3" font-size="29.8" font-weight="700" fill="#e2572b" stroke="#e2572b" stroke-width="1.7" stroke-linejoin="round" textLength="331.8" lengthAdjust="spacing">IN DIGITAL SPACES</text></g><text x="128.6" y="150.9" font-size="10.8" fill="#808080" textLength="197.6" lengthAdjust="spacing">REDEFINING SOCIAL MOVEMENTS</text><text x="128.3" y="164" font-size="10.8" fill="#808080" textLength="187.4" lengthAdjust="spacing">ON THE CONTINENT AND IN THE</text><text x="128.6" y="177" font-size="10.8" fill="#808080" textLength="60.8" lengthAdjust="spacing">DIASPORA</text></g><line x1="71.5" y1="65.0" x2="72.3" y2="81.7" stroke="#fff" stroke-width="0.6" opacity=".8"/><line x1="24.3" y1="104.0" x2="25.5" y2="125.2" stroke="#fff" stroke-width="0.6" opacity=".8"/><line x1="137.0" y1="104.0" x2="138.1" y2="126.2" stroke="#fff" stroke-width="0.7" opacity=".8"/><line x1="225.6" y1="65.0" x2="226.9" y2="86.9" stroke="#fff" stroke-width="1.0" opacity=".8"/><line x1="62.2" y1="104.0" x2="61.3" y2="126.9" stroke="#fff" stroke-width="1.1" opacity=".8"/><line x1="205.0" y1="104.0" x2="203.3" y2="122.7" stroke="#fff" stroke-width="0.9" opacity=".8"/><line x1="130.3" y1="65.0" x2="129.3" y2="78.5" stroke="#fff" stroke-width="1.1" opacity=".8"/><line x1="198.3" y1="104.0" x2="196.3" y2="117.7" stroke="#fff" stroke-width="0.9" opacity=".8"/><line x1="88.0" y1="65.0" x2="87.6" y2="83.6" stroke="#fff" stroke-width="0.8" opacity=".8"/><line x1="55.2" y1="104.0" x2="54.2" y2="125.8" stroke="#fff" stroke-width="0.5" opacity=".8"/><line x1="120.9" y1="104.0" x2="120.9" y2="123.4" stroke="#fff" stroke-width="0.9" opacity=".8"/><line x1="51.6" y1="65.0" x2="49.9" y2="88.6" stroke="#fff" stroke-width="0.9" opacity=".8"/><line x1="116.2" y1="65.0" x2="115.6" y2="86.0" stroke="#fff" stroke-width="0.7" opacity=".8"/><line x1="141.8" y1="104.0" x2="140.2" y2="114.0" stroke="#fff" stroke-width="0.6" opacity=".8"/><line x1="186.8" y1="65.0" x2="185.3" y2="89.0" stroke="#fff" stroke-width="0.7" opacity=".8"/><line x1="25.6" y1="104.0" x2="26.4" y2="127.3" stroke="#fff" stroke-width="1.1" opacity=".8"/><line x1="180.2" y1="104.0" x2="178.3" y2="117.6" stroke="#fff" stroke-width="1.1" opacity=".8"/><line x1="189.0" y1="104.0" x2="190.4" y2="126.9" stroke="#fff" stroke-width="0.9" opacity=".8"/><line x1="37.0" y1="65.0" x2="38.5" y2="78.7" stroke="#fff" stroke-width="0.7" opacity=".8"/><line x1="150.5" y1="65.0" x2="149.9" y2="74.2" stroke="#fff" stroke-width="0.5" opacity=".8"/><line x1="57.0" y1="104.0" x2="59.0" y2="122.1" stroke="#fff" stroke-width="0.8" opacity=".8"/><line x1="65.2" y1="65.0" x2="63.6" y2="75.0" stroke="#fff" stroke-width="0.9" opacity=".8"/><line x1="149.8" y1="65.0" x2="150.3" y2="82.7" stroke="#fff" stroke-width="0.8" opacity=".8"/><line x1="90.1" y1="65.0" x2="88.6" y2="82.5" stroke="#fff" stroke-width="1.0" opacity=".8"/><line x1="109.2" y1="65.0" x2="109.1" y2="77.9" stroke="#fff" stroke-width="0.7" opacity=".8"/><line x1="28.0" y1="104.0" x2="27.8" y2="123.4" stroke="#fff" stroke-width="0.8" opacity=".8"/></g></svg>
<svg id="ports" class="abs" style="left:0;top:0" width="1400" height="788" viewBox="0 0 1400 788"><defs><clipPath id="cp1"><ellipse cx="1286.8" cy="279.2" rx="86.8" ry="91.6"/></clipPath><clipPath id="cp2"><ellipse cx="1287" cy="480.6" rx="86.4" ry="91"/></clipPath><radialGradient id="gface1" cx=".42" cy=".38" r=".7"><stop offset="0" stop-color="#8a5238"/><stop offset=".55" stop-color="#663a28"/><stop offset="1" stop-color="#3c2018"/></radialGradient><linearGradient id="ghair1" x1="0" y1="0" x2="0" y2="1"><stop offset="0" stop-color="#3a1622"/><stop offset=".5" stop-color="#5c1f33"/><stop offset="1" stop-color="#8a2438"/></linearGradient><radialGradient id="gface2" cx=".5" cy=".42" r=".62"><stop offset="0" stop-color="#a06c50"/><stop offset=".55" stop-color="#7c4e3a"/><stop offset="1" stop-color="#4c2c20"/></radialGradient><radialGradient id="gbg2" cx=".22" cy=".4" r=".75"><stop offset="0" stop-color="#fff4d2"/><stop offset=".3" stop-color="#efe0bf"/><stop offset="1" stop-color="#d3c6a8"/></radialGradient></defs><g clip-path="url(#cp1)"><rect x="1195" y="183" width="185" height="195" fill="#f9efe7"/><path d="M1246.3 256.1 C1239.5 218.1 1261.1 193.2 1284.4 194.0 C1309.3 195.2 1320.7 220.6 1324.5 256.1 C1329.1 289.1 1340.3 322.1 1339.2 347.5 L1333.4 375.4 L1286.4 375.4 L1291.5 322.1 L1291.5 256.1 Z" fill="url(#ghair1)"/><clipPath id="cpd"><path d="M1205.2 332.3 C1225.5 317.1 1248.4 312.0 1266.1 306.9 L1311.8 312.0 C1332.1 312.0 1352.4 319.6 1367.7 332.3 L1367.7 383.0 L1205.2 383.0 Z"/></clipPath><path d="M1205.2 332.3 C1225.5 317.1 1248.4 312.0 1266.1 306.9 L1311.8 312.0 C1332.1 312.0 1352.4 319.6 1367.7 332.3 L1367.7 383.0 L1205.2 383.0 Z" fill="#e98a55"/><g clip-path="url(#cpd)"><ellipse cx="1360.5" cy="371.9" rx="2.2" ry="1.4" fill="#f0a020" transform="rotate(171 1360.5 371.9)"/><ellipse cx="1343.9" cy="324.1" rx="2.8" ry="1.3" fill="#f0a020" transform="rotate(110 1343.9 324.1)"/><ellipse cx="1308.9" cy="362.0" rx="5.4" ry="2.4" fill="#f6c4a8" transform="rotate(139 1308.9 362.0)"/><ellipse cx="1357.2" cy="341.3" rx="5.6" ry="3.3" fill="#f6c4a8" transform="rotate(119 1357.2 341.3)"/><ellipse cx="1356.6" cy="369.1" rx="3.7" ry="3.3" fill="#f0a020" transform="rotate(143 1356.6 369.1)"/><ellipse cx="1234.1" cy="322.7" rx="2.7" ry="1.6" fill="#43264f" transform="rotate(130 1234.1 322.7)"/><ellipse cx="1263.7" cy="342.1" rx="4.2" ry="3.6" fill="#33204a" transform="rotate(106 1263.7 342.1)"/><ellipse cx="1324.5" cy="369.0" rx="5.1" ry="3.1" fill="#f6c4a8" transform="rotate(92 1324.5 369.0)"/><ellipse cx="1364.6" cy="372.8" rx="2.6" ry="3.0" fill="#33204a" transform="rotate(167 1364.6 372.8)"/><ellipse cx="1291.4" cy="340.5" rx="5.7" ry="2.4" fill="#f6c4a8" transform="rotate(169 1291.4 340.5)"/><ellipse cx="1348.6" cy="368.6" rx="3.8" ry="2.6" fill="#43264f" transform="rotate(116 1348.6 368.6)"/><ellipse cx="1284.3" cy="322.1" rx="3.3" ry="2.9" fill="#f0a020" transform="rotate(157 1284.3 322.1)"/><ellipse cx="1248.8" cy="369.4" rx="3.2" ry="3.5" fill="#43264f" transform="rotate(143 1248.8 369.4)"/><ellipse cx="1289.3" cy="351.5" rx="4.4" ry="1.9" fill="#d8602a" transform="rotate(125 1289.3 351.5)"/><ellipse cx="1288.4" cy="370.9" rx="4.5" ry="1.4" fill="#f6c4a8" transform="rotate(2 1288.4 370.9)"/><ellipse cx="1352.7" cy="320.0" rx="5.0" ry="1.3" fill="#43264f" transform="rotate(69 1352.7 320.0)"/><ellipse cx="1301.3" cy="353.7" rx="5.7" ry="3.0" fill="#f0a020" transform="rotate(68 1301.3 353.7)"/><ellipse cx="1245.0" cy="321.3" rx="5.5" ry="2.2" fill="#43264f" transform="rotate(14 1245.0 321.3)"/><ellipse cx="1264.1" cy="318.7" rx="4.7" ry="1.4" fill="#f3b08f" transform="rotate(6 1264.1 318.7)"/><ellipse cx="1211.9" cy="369.9" rx="3.5" ry="1.5" fill="#f0a020" transform="rotate(47 1211.9 369.9)"/><ellipse cx="1290.2" cy="307.0" rx="4.4" ry="3.1" fill="#d8602a" transform="rotate(38 1290.2 307.0)"/><ellipse cx="1362.9" cy="307.2" rx="5.8" ry="2.7" fill="#f3b08f" transform="rotate(73 1362.9 307.2)"/><ellipse cx="1260.0" cy="309.0" rx="3.8" ry="3.0" fill="#43264f" transform="rotate(67 1260.0 309.0)"/><ellipse cx="1328.0" cy="366.0" rx="4.8" ry="2.3" fill="#d8602a" transform="rotate(23 1328.0 366.0)"/><ellipse cx="1312.6" cy="328.6" rx="2.4" ry="2.3" fill="#f0a020" transform="rotate(132 1312.6 328.6)"/><ellipse cx="1300.2" cy="333.8" rx="4.1" ry="1.5" fill="#f6c4a8" transform="rotate(66 1300.2 333.8)"/><ellipse cx="1247.8" cy="373.4" rx="4.6" ry="2.9" fill="#f0a020" transform="rotate(171 1247.8 373.4)"/><ellipse cx="1214.5" cy="309.2" rx="2.6" ry="1.4" fill="#d8602a" transform="rotate(130 1214.5 309.2)"/><ellipse cx="1354.1" cy="355.4" rx="2.1" ry="1.8" fill="#33204a" transform="rotate(18 1354.1 355.4)"/><ellipse cx="1246.0" cy="347.4" rx="4.5" ry="3.1" fill="#f6c4a8" transform="rotate(65 1246.0 347.4)"/><ellipse cx="1316.4" cy="326.0" rx="5.0" ry="1.6" fill="#e8702e" transform="rotate(104 1316.4 326.0)"/><ellipse cx="1231.3" cy="342.0" rx="2.4" ry="1.4" fill="#43264f" transform="rotate(46 1231.3 342.0)"/><ellipse cx="1327.2" cy="314.1" rx="2.1" ry="2.8" fill="#33204a" transform="rotate(79 1327.2 314.1)"/><ellipse cx="1292.2" cy="332.9" rx="4.7" ry="3.0" fill="#d8602a" transform="rotate(111 1292.2 332.9)"/><ellipse cx="1274.4" cy="308.4" rx="4.4" ry="3.3" fill="#43264f" transform="rotate(148 1274.4 308.4)"/><ellipse cx="1234.7" cy="313.3" rx="5.2" ry="2.1" fill="#43264f" transform="rotate(30 1234.7 313.3)"/><ellipse cx="1304.4" cy="326.7" rx="5.9" ry="2.1" fill="#43264f" transform="rotate(175 1304.4 326.7)"/><ellipse cx="1272.2" cy="314.1" rx="2.8" ry="3.1" fill="#43264f" transform="rotate(115 1272.2 314.1)"/><ellipse cx="1215.0" cy="350.6" rx="3.9" ry="3.3" fill="#f2a27c" transform="rotate(18 1215.0 350.6)"/><ellipse cx="1206.1" cy="308.6" rx="3.2" ry="2.9" fill="#d8602a" transform="rotate(125 1206.1 308.6)"/><ellipse cx="1236.5" cy="346.1" rx="3.6" ry="2.3" fill="#f6c4a8" transform="rotate(101 1236.5 346.1)"/><ellipse cx="1349.4" cy="324.3" rx="2.5" ry="2.7" fill="#f6c4a8" transform="rotate(164 1349.4 324.3)"/><ellipse cx="1268.8" cy="321.4" rx="2.4" ry="2.7" fill="#33204a" transform="rotate(11 1268.8 321.4)"/><ellipse cx="1322.8" cy="341.0" rx="3.4" ry="2.3" fill="#f6c4a8" transform="rotate(68 1322.8 341.0)"/><ellipse cx="1283.9" cy="366.2" rx="4.9" ry="2.9" fill="#e8702e" transform="rotate(125 1283.9 366.2)"/><ellipse cx="1341.0" cy="327.2" rx="2.9" ry="2.4" fill="#4a2344" transform="rotate(140 1341.0 327.2)"/><ellipse cx="1274.7" cy="353.4" rx="5.7" ry="2.6" fill="#f2a27c" transform="rotate(24 1274.7 353.4)"/><ellipse cx="1216.8" cy="319.0" rx="4.2" ry="3.1" fill="#f3b08f" transform="rotate(22 1216.8 319.0)"/><ellipse cx="1353.3" cy="353.6" rx="5.2" ry="1.3" fill="#4a2344" transform="rotate(99 1353.3 353.6)"/><ellipse cx="1242.9" cy="352.9" rx="4.7" ry="2.3" fill="#43264f" transform="rotate(73 1242.9 352.9)"/><ellipse cx="1223.4" cy="344.0" rx="5.8" ry="3.0" fill="#f3b08f" transform="rotate(84 1223.4 344.0)"/><ellipse cx="1289.1" cy="355.9" rx="3.0" ry="3.3" fill="#33204a" transform="rotate(180 1289.1 355.9)"/><ellipse cx="1243.3" cy="366.8" rx="3.4" ry="3.0" fill="#f0a020" transform="rotate(119 1243.3 366.8)"/><ellipse cx="1276.9" cy="308.9" rx="4.4" ry="3.3" fill="#f0a020" transform="rotate(100 1276.9 308.9)"/><ellipse cx="1288.1" cy="340.0" rx="3.6" ry="2.9" fill="#e8702e" transform="rotate(180 1288.1 340.0)"/><ellipse cx="1310.5" cy="331.6" rx="4.2" ry="2.9" fill="#f3b08f" transform="rotate(57 1310.5 331.6)"/><ellipse cx="1291.8" cy="319.8" rx="5.3" ry="2.1" fill="#43264f" transform="rotate(80 1291.8 319.8)"/><ellipse cx="1280.7" cy="355.7" rx="5.5" ry="2.8" fill="#f3b08f" transform="rotate(4 1280.7 355.7)"/><ellipse cx="1270.7" cy="321.7" rx="4.3" ry="2.1" fill="#d8602a" transform="rotate(25 1270.7 321.7)"/><ellipse cx="1268.6" cy="345.1" rx="5.2" ry="1.9" fill="#f2a27c" transform="rotate(148 1268.6 345.1)"/><ellipse cx="1236.3" cy="362.0" rx="2.6" ry="2.7" fill="#e8702e" transform="rotate(123 1236.3 362.0)"/><ellipse cx="1246.4" cy="345.7" rx="3.9" ry="1.7" fill="#f3b08f" transform="rotate(89 1246.4 345.7)"/><ellipse cx="1205.7" cy="340.2" rx="5.3" ry="2.8" fill="#f2a27c" transform="rotate(124 1205.7 340.2)"/><ellipse cx="1355.5" cy="370.1" rx="3.8" ry="3.3" fill="#33204a" transform="rotate(7 1355.5 370.1)"/><ellipse cx="1365.6" cy="348.9" rx="3.4" ry="3.0" fill="#e8702e" transform="rotate(65 1365.6 348.9)"/><ellipse cx="1314.9" cy="360.9" rx="5.5" ry="1.5" fill="#f0a020" transform="rotate(127 1314.9 360.9)"/><ellipse cx="1267.2" cy="338.7" rx="3.2" ry="1.2" fill="#43264f" transform="rotate(119 1267.2 338.7)"/><ellipse cx="1362.3" cy="332.0" rx="4.2" ry="2.1" fill="#33204a" transform="rotate(52 1362.3 332.0)"/><ellipse cx="1346.6" cy="328.0" rx="4.6" ry="2.4" fill="#43264f" transform="rotate(77 1346.6 328.0)"/><ellipse cx="1217.7" cy="363.4" rx="3.2" ry="2.8" fill="#4a2344" transform="rotate(167 1217.7 363.4)"/><ellipse cx="1309.6" cy="342.4" rx="5.7" ry="2.4" fill="#d8602a" transform="rotate(100 1309.6 342.4)"/><ellipse cx="1302.1" cy="365.0" rx="2.6" ry="2.4" fill="#f3b08f" transform="rotate(78 1302.1 365.0)"/><ellipse cx="1211.9" cy="372.0" rx="4.2" ry="2.5" fill="#43264f" transform="rotate(28 1211.9 372.0)"/><ellipse cx="1223.4" cy="363.0" rx="3.5" ry="2.1" fill="#f6c4a8" transform="rotate(91 1223.4 363.0)"/><ellipse cx="1217.8" cy="338.2" rx="2.7" ry="2.3" fill="#4a2344" transform="rotate(118 1217.8 338.2)"/><ellipse cx="1350.5" cy="370.1" rx="3.8" ry="2.7" fill="#4a2344" transform="rotate(83 1350.5 370.1)"/><ellipse cx="1231.1" cy="367.7" rx="3.9" ry="3.0" fill="#f6c4a8" transform="rotate(47 1231.1 367.7)"/><ellipse cx="1263.1" cy="361.4" rx="2.9" ry="3.1" fill="#e8702e" transform="rotate(102 1263.1 361.4)"/><ellipse cx="1336.6" cy="358.3" rx="3.1" ry="2.9" fill="#f2a27c" transform="rotate(128 1336.6 358.3)"/><ellipse cx="1299.6" cy="357.1" rx="3.3" ry="2.2" fill="#4a2344" transform="rotate(136 1299.6 357.1)"/><ellipse cx="1306.3" cy="352.9" rx="3.5" ry="2.1" fill="#f0a020" transform="rotate(66 1306.3 352.9)"/><ellipse cx="1360.8" cy="331.2" rx="3.9" ry="3.3" fill="#f0a020" transform="rotate(80 1360.8 331.2)"/><ellipse cx="1361.3" cy="315.6" rx="2.1" ry="2.0" fill="#f6c4a8" transform="rotate(19 1361.3 315.6)"/><ellipse cx="1354.3" cy="367.4" rx="5.0" ry="2.2" fill="#43264f" transform="rotate(82 1354.3 367.4)"/><ellipse cx="1243.7" cy="364.0" rx="3.6" ry="1.9" fill="#f0a020" transform="rotate(92 1243.7 364.0)"/><ellipse cx="1256.6" cy="370.4" rx="2.4" ry="1.5" fill="#d8602a" transform="rotate(84 1256.6 370.4)"/><ellipse cx="1246.0" cy="335.7" rx="3.0" ry="2.0" fill="#d8602a" transform="rotate(61 1246.0 335.7)"/><ellipse cx="1323.5" cy="310.1" rx="5.8" ry="2.8" fill="#f2a27c" transform="rotate(15 1323.5 310.1)"/><ellipse cx="1345.3" cy="319.1" rx="2.3" ry="2.3" fill="#4a2344" transform="rotate(33 1345.3 319.1)"/><ellipse cx="1257.4" cy="346.4" rx="2.5" ry="2.8" fill="#f2a27c" transform="rotate(101 1257.4 346.4)"/><ellipse cx="1242.2" cy="310.6" rx="5.1" ry="2.4" fill="#f6c4a8" transform="rotate(139 1242.2 310.6)"/><ellipse cx="1341.3" cy="347.9" rx="4.4" ry="2.5" fill="#33204a" transform="rotate(102 1341.3 347.9)"/><ellipse cx="1341.8" cy="338.1" rx="3.6" ry="2.5" fill="#43264f" transform="rotate(27 1341.8 338.1)"/><ellipse cx="1278.5" cy="347.4" rx="2.5" ry="3.4" fill="#43264f" transform="rotate(44 1278.5 347.4)"/><ellipse cx="1217.8" cy="327.9" rx="5.2" ry="1.2" fill="#f3b08f" transform="rotate(171 1217.8 327.9)"/><ellipse cx="1262.2" cy="318.8" rx="2.6" ry="2.8" fill="#f3b08f" transform="rotate(86 1262.2 318.8)"/><ellipse cx="1363.0" cy="351.4" rx="2.2" ry="3.4" fill="#d8602a" transform="rotate(16 1363.0 351.4)"/><ellipse cx="1283.4" cy="345.2" rx="2.6" ry="2.4" fill="#43264f" transform="rotate(12 1283.4 345.2)"/><ellipse cx="1237.7" cy="369.9" rx="5.3" ry="2.5" fill="#43264f" transform="rotate(61 1237.7 369.9)"/><ellipse cx="1228.0" cy="340.6" rx="2.5" ry="1.5" fill="#f3b08f" transform="rotate(119 1228.0 340.6)"/><ellipse cx="1239.6" cy="310.5" rx="2.9" ry="2.1" fill="#f2a27c" transform="rotate(165 1239.6 310.5)"/><ellipse cx="1344.7" cy="368.9" rx="4.9" ry="2.4" fill="#f0a020" transform="rotate(130 1344.7 368.9)"/><ellipse cx="1222.4" cy="362.9" rx="4.5" ry="1.7" fill="#e8702e" transform="rotate(51 1222.4 362.9)"/><ellipse cx="1253.5" cy="336.4" rx="3.7" ry="2.2" fill="#4a2344" transform="rotate(25 1253.5 336.4)"/><ellipse cx="1296.6" cy="339.3" rx="3.1" ry="3.0" fill="#4a2344" transform="rotate(58 1296.6 339.3)"/><ellipse cx="1273.6" cy="316.3" rx="4.2" ry="1.4" fill="#f2a27c" transform="rotate(141 1273.6 316.3)"/><ellipse cx="1327.3" cy="321.5" rx="3.6" ry="1.3" fill="#f0a020" transform="rotate(160 1327.3 321.5)"/><ellipse cx="1209.0" cy="324.9" rx="4.9" ry="2.5" fill="#d8602a" transform="rotate(36 1209.0 324.9)"/><ellipse cx="1302.4" cy="309.5" rx="2.8" ry="1.5" fill="#43264f" transform="rotate(47 1302.4 309.5)"/><ellipse cx="1329.1" cy="313.2" rx="4.7" ry="3.3" fill="#4a2344" transform="rotate(53 1329.1 313.2)"/><ellipse cx="1230.8" cy="329.1" rx="5.3" ry="3.2" fill="#43264f" transform="rotate(145 1230.8 329.1)"/><ellipse cx="1216.2" cy="368.4" rx="4.7" ry="1.3" fill="#4a2344" transform="rotate(168 1216.2 368.4)"/><ellipse cx="1345.3" cy="350.5" rx="4.9" ry="3.5" fill="#43264f" transform="rotate(54 1345.3 350.5)"/><ellipse cx="1273.2" cy="324.8" rx="4.9" ry="2.6" fill="#d8602a" transform="rotate(110 1273.2 324.8)"/><ellipse cx="1330.7" cy="354.4" rx="5.1" ry="2.3" fill="#33204a" transform="rotate(88 1330.7 354.4)"/><ellipse cx="1267.4" cy="348.9" rx="4.5" ry="2.6" fill="#33204a" transform="rotate(49 1267.4 348.9)"/><ellipse cx="1327.9" cy="365.2" rx="3.4" ry="1.4" fill="#f6c4a8" transform="rotate(154 1327.9 365.2)"/><ellipse cx="1307.0" cy="339.2" rx="5.1" ry="2.8" fill="#f2a27c" transform="rotate(32 1307.0 339.2)"/><ellipse cx="1316.0" cy="328.0" rx="2.8" ry="3.2" fill="#4a2344" transform="rotate(25 1316.0 328.0)"/><ellipse cx="1207.3" cy="366.6" rx="2.8" ry="2.0" fill="#f6c4a8" transform="rotate(136 1207.3 366.6)"/><ellipse cx="1246.8" cy="356.5" rx="3.4" ry="2.3" fill="#e8702e" transform="rotate(120 1246.8 356.5)"/><ellipse cx="1340.6" cy="308.2" rx="4.3" ry="1.5" fill="#f0a020" transform="rotate(41 1340.6 308.2)"/><ellipse cx="1303.8" cy="332.6" rx="2.3" ry="2.6" fill="#4a2344" transform="rotate(165 1303.8 332.6)"/><ellipse cx="1218.6" cy="339.7" rx="5.2" ry="1.8" fill="#f2a27c" transform="rotate(76 1218.6 339.7)"/><ellipse cx="1343.1" cy="365.6" rx="2.9" ry="2.7" fill="#f6c4a8" transform="rotate(151 1343.1 365.6)"/><ellipse cx="1305.3" cy="333.8" rx="3.6" ry="2.7" fill="#43264f" transform="rotate(15 1305.3 333.8)"/><ellipse cx="1247.7" cy="324.0" rx="5.8" ry="3.0" fill="#e8702e" transform="rotate(30 1247.7 324.0)"/><ellipse cx="1362.9" cy="333.8" rx="3.9" ry="2.1" fill="#d8602a" transform="rotate(61 1362.9 333.8)"/><ellipse cx="1241.6" cy="343.4" rx="5.3" ry="1.4" fill="#43264f" transform="rotate(172 1241.6 343.4)"/><ellipse cx="1205.8" cy="333.4" rx="3.7" ry="1.8" fill="#4a2344" transform="rotate(25 1205.8 333.4)"/><ellipse cx="1264.4" cy="331.7" rx="5.8" ry="2.4" fill="#f3b08f" transform="rotate(180 1264.4 331.7)"/><ellipse cx="1280.0" cy="355.0" rx="3.1" ry="1.3" fill="#43264f" transform="rotate(33 1280.0 355.0)"/><ellipse cx="1310.6" cy="321.1" rx="3.0" ry="1.3" fill="#f0a020" transform="rotate(165 1310.6 321.1)"/><ellipse cx="1253.2" cy="359.1" rx="4.6" ry="2.5" fill="#f0a020" transform="rotate(111 1253.2 359.1)"/><ellipse cx="1320.1" cy="309.2" rx="4.0" ry="1.8" fill="#43264f" transform="rotate(142 1320.1 309.2)"/><ellipse cx="1262.9" cy="330.2" rx="5.7" ry="2.7" fill="#f3b08f" transform="rotate(155 1262.9 330.2)"/><ellipse cx="1332.6" cy="331.8" rx="5.8" ry="2.7" fill="#33204a" transform="rotate(72 1332.6 331.8)"/><ellipse cx="1288.0" cy="373.2" rx="2.1" ry="2.0" fill="#43264f" transform="rotate(89 1288.0 373.2)"/><ellipse cx="1314.5" cy="375.4" rx="4.9" ry="3.3" fill="#f3b08f" transform="rotate(176 1314.5 375.4)"/><ellipse cx="1293.0" cy="348.7" rx="3.7" ry="2.2" fill="#f0a020" transform="rotate(41 1293.0 348.7)"/><ellipse cx="1304.9" cy="308.0" rx="5.0" ry="2.9" fill="#f6c4a8" transform="rotate(172 1304.9 308.0)"/><ellipse cx="1234.7" cy="308.3" rx="5.5" ry="3.5" fill="#f2a27c" transform="rotate(56 1234.7 308.3)"/><ellipse cx="1270.7" cy="369.2" rx="2.4" ry="2.6" fill="#f3b08f" transform="rotate(62 1270.7 369.2)"/><ellipse cx="1243.1" cy="319.9" rx="2.0" ry="2.2" fill="#43264f" transform="rotate(71 1243.1 319.9)"/><ellipse cx="1299.8" cy="322.1" rx="4.1" ry="3.6" fill="#e8702e" transform="rotate(109 1299.8 322.1)"/><ellipse cx="1353.8" cy="315.6" rx="3.7" ry="2.3" fill="#f6c4a8" transform="rotate(13 1353.8 315.6)"/><ellipse cx="1363.4" cy="346.1" rx="4.1" ry="2.3" fill="#e8702e" transform="rotate(153 1363.4 346.1)"/><ellipse cx="1359.7" cy="361.7" rx="4.6" ry="1.6" fill="#f2a27c" transform="rotate(32 1359.7 361.7)"/><ellipse cx="1343.7" cy="316.9" rx="3.0" ry="1.6" fill="#f0a020" transform="rotate(163 1343.7 316.9)"/><ellipse cx="1272.2" cy="350.1" rx="5.9" ry="2.3" fill="#d8602a" transform="rotate(108 1272.2 350.1)"/></g><path d="M1263.6 281.5 L1305.5 281.5 L1309.3 317.1 L1290.3 357.7 L1258.5 313.2 Z" fill="#5a3224"/><path d="M1266.1 289.1 L1301.7 291.7 L1304.2 306.9 L1273.8 301.8 Z" fill="#3e2018"/><ellipse cx="1277.6" cy="254.1" rx="28.4" ry="37.6" fill="url(#gface1)"/><path d="M1245.3 248.5 C1244.6 223.1 1256.5 204.1 1273.8 197.8 C1291.5 194.0 1309.3 202.8 1314.4 225.7 L1318.2 263.8 L1309.3 263.8 C1308.0 240.9 1299.1 220.6 1278.8 214.3 C1263.6 213.0 1252.2 225.7 1249.6 249.8 Z" fill="#3a1826"/><path d="M1305.5 230.8 L1319.9 230.8 C1327.1 286.6 1340.3 322.1 1339.2 347.5 L1333.4 375.4 L1287.7 375.4 C1297.9 342.4 1307.3 301.8 1305.5 230.8 Z" fill="url(#ghair1)"/><path d="M1306.2 230.8 C1311.8 281.5 1298.6 322.1 1291.0 374.2" fill="none" stroke="#9a2e48" stroke-width=".9" opacity=".8"/><path d="M1307.8 230.8 C1313.4 281.5 1303.7 322.1 1296.1 374.2" fill="none" stroke="#2a0f1a" stroke-width=".9" opacity=".8"/><path d="M1309.4 230.8 C1315.0 281.5 1308.8 322.1 1301.2 374.2" fill="none" stroke="#9a2e48" stroke-width=".9" opacity=".8"/><path d="M1311.0 230.8 C1316.5 281.5 1313.9 322.1 1306.2 374.2" fill="none" stroke="#2a0f1a" stroke-width=".9" opacity=".8"/><path d="M1312.5 230.8 C1318.1 281.5 1318.9 322.1 1311.3 374.2" fill="none" stroke="#9a2e48" stroke-width=".9" opacity=".8"/><path d="M1314.1 230.8 C1319.7 281.5 1324.0 322.1 1316.4 374.2" fill="none" stroke="#2a0f1a" stroke-width=".9" opacity=".8"/><path d="M1315.7 230.8 C1321.3 281.5 1329.1 322.1 1321.5 374.2" fill="none" stroke="#9a2e48" stroke-width=".9" opacity=".8"/><path d="M1317.3 230.8 C1322.8 281.5 1334.2 322.1 1326.5 374.2" fill="none" stroke="#2a0f1a" stroke-width=".9" opacity=".8"/><path d="M1318.8 230.8 C1324.4 281.5 1339.2 322.1 1331.6 374.2" fill="none" stroke="#9a2e48" stroke-width=".9" opacity=".8"/><ellipse cx="1263.1" cy="251.1" rx="5.2" ry="2.6" fill="#e9e0dc"/><circle cx="1263.6" cy="251.1" r="2.3" fill="#1a0f0c"/><ellipse cx="1292.0" cy="244.7" rx="5.2" ry="2.6" fill="#e9e0dc"/><circle cx="1292.5" cy="244.7" r="2.3" fill="#1a0f0c"/><path d="M1255.5 245.5 Q1262.3 240.9 1269.9 244.7" stroke="#24120e" stroke-width="1.6" fill="none"/><path d="M1284.4 239.9 Q1292.8 235.8 1301.2 240.4" stroke="#24120e" stroke-width="1.6" fill="none"/><path d="M1272.5 262.5 Q1279.3 267.6 1286.4 261.7" stroke="#3a1c14" stroke-width="1.8" fill="none"/><ellipse cx="1283.4" cy="276.4" rx="10.5" ry="4.2" fill="#a84a62"/><path d="M1273.2 276.4 L1293.6 274.9" stroke="#5a2030" stroke-width="1"/><path d="M1258.0 282.8 L1254.0 296.8" stroke="#c9a23a" stroke-width="1.3"/><circle cx="1253.5" cy="299.3" r="2.8" fill="#d8202a"/><path d="M1253.5 302.3 L1252.4 312.0" stroke="#2a1a10" stroke-width="1.6"/></g><g clip-path="url(#cp2)"><rect x="1195" y="385" width="185" height="195" fill="url(#gbg2)"/><polygon points="1302.8,391.9 1313.2,393.4 1313.2,412.7 1302.8,411.7" fill="#8a6a34"/><polygon points="1303.8,397.4 1312.7,398.4 1312.7,404.3 1303.8,403.8" fill="#5aa08a"/><polygon points="1303.8,404.8 1312.7,405.3 1312.7,410.7 1303.8,410.2" fill="#e0822a"/><polygon points="1199.9,487.6 1248.2,485.2 1256.8,493.8 1256.8,503.7 1224.7,523.5 1199.9,523.5" fill="#7a756e"/><polygon points="1199.9,487.6 1248.2,485.2 1256.8,493.8 1204.9,497.5" fill="#96918a"/><polygon points="1323.6,491.4 1375.6,500.0 1375.6,533.4 1323.6,523.5" fill="#87827a"/><polygon points="1323.6,491.4 1375.6,500.0 1375.6,506.7 1326.1,497.5" fill="#a29c92"/><polygon points="1204.9,514.9 1222.2,513.6 1224.7,533.4 1204.9,535.9" fill="#a24a5c"/><path d="M1212.3 543.3 C1217.3 523.5 1237.0 508.7 1256.8 501.3 L1323.6 503.7 C1340.9 508.7 1358.2 523.5 1365.7 543.3 L1365.7 582.9 L1212.3 582.9 Z" fill="#24262a"/><polygon points="1232.1,523.5 1256.8,508.7 1260.5,533.4 1253.1,563.1 1239.5,543.3" fill="#34373d"/><polygon points="1323.6,513.6 1343.4,523.5 1333.5,555.7 1311.3,558.1" fill="#303338"/><polygon points="1265.5,513.6 1318.7,513.6 1311.3,545.8 1276.6,573.0 1261.8,568.0" fill="#6c402e"/><polygon points="1269.2,523.5 1313.7,526.0 1306.3,543.3 1276.6,538.4" fill="#4e2c20"/><path d="M1263.8 508.7 L1258.3 564.3" stroke="#e8662a" stroke-width="2.6" fill="none"/><path d="M1317.9 513.6 L1301.9 543.3" stroke="#e8662a" stroke-width="2.6" fill="none"/><ellipse cx="1290.2" cy="446.8" rx="35.4" ry="33.4" fill="#33251c"/><ellipse cx="1282.1" cy="406.8" rx="23.0" ry="16.3" fill="#2c2018"/><path d="M1259.8 443.1 Q1276.6 424.6 1276.6 414.7" stroke="#6d563f" stroke-width="1.5" fill="none" opacity=".85"/><path d="M1267.7 443.1 Q1279.6 424.6 1278.6 414.7" stroke="#6d563f" stroke-width="1.5" fill="none" opacity=".85"/><path d="M1275.6 443.1 Q1282.6 424.6 1280.6 414.7" stroke="#6d563f" stroke-width="1.5" fill="none" opacity=".85"/><path d="M1283.5 443.1 Q1285.5 424.6 1282.6 414.7" stroke="#6d563f" stroke-width="1.5" fill="none" opacity=".85"/><path d="M1291.5 443.1 Q1288.5 424.6 1284.5 414.7" stroke="#6d563f" stroke-width="1.5" fill="none" opacity=".85"/><path d="M1299.4 443.1 Q1291.5 424.6 1286.5 414.7" stroke="#6d563f" stroke-width="1.5" fill="none" opacity=".85"/><path d="M1307.3 443.1 Q1294.4 424.6 1288.5 414.7" stroke="#6d563f" stroke-width="1.5" fill="none" opacity=".85"/><path d="M1315.2 443.1 Q1297.4 424.6 1290.5 414.7" stroke="#6d563f" stroke-width="1.5" fill="none" opacity=".85"/><path d="M1323.1 443.1 Q1300.4 424.6 1292.5 414.7" stroke="#6d563f" stroke-width="1.5" fill="none" opacity=".85"/><path d="M1263.0 409.7 Q1281.6 389.9 1303.3 407.3" stroke="#5f4a36" stroke-width="1.4" fill="none" opacity=".8"/><path d="M1265.0 411.2 Q1281.6 395.4 1301.9 409.2" stroke="#5f4a36" stroke-width="1.4" fill="none" opacity=".8"/><path d="M1267.0 412.7 Q1281.6 400.8 1300.4 411.2" stroke="#5f4a36" stroke-width="1.4" fill="none" opacity=".8"/><path d="M1269.0 414.2 Q1281.6 406.3 1298.9 413.2" stroke="#5f4a36" stroke-width="1.4" fill="none" opacity=".8"/><path d="M1270.9 415.7 Q1281.6 411.7 1297.4 415.2" stroke="#5f4a36" stroke-width="1.4" fill="none" opacity=".8"/><ellipse cx="1290.2" cy="485.2" rx="36.1" ry="49.5" fill="url(#gface2)"/><path d="M1253.9 471.6 C1254.4 441.9 1269.2 432.0 1290.2 432.0 C1311.3 432.0 1325.6 441.9 1326.1 471.6 C1319.9 449.8 1306.3 442.4 1290.2 442.4 C1274.1 442.4 1259.8 449.8 1253.9 471.6 Z" fill="#33251c"/><ellipse cx="1274.6" cy="481.0" rx="6" ry="2.8" fill="#d8cbc0"/><circle cx="1275.1" cy="481.0" r="2.5" fill="#1a0f0c"/><ellipse cx="1309.3" cy="480.0" rx="6" ry="2.8" fill="#d8cbc0"/><circle cx="1309.3" cy="480.0" r="2.5" fill="#1a0f0c"/><path d="M1264.3 474.0 Q1274.1 468.6 1285.3 473.5" stroke="#2a1610" stroke-width="2" fill="none"/><path d="M1298.9 472.6 Q1310.0 467.6 1319.9 473.5" stroke="#2a1610" stroke-width="2" fill="none"/><path d="M1281.6 499.3 Q1291.5 505.2 1301.9 498.8" stroke="#3e2016" stroke-width="2.2" fill="none"/><path d="M1277.9 512.6 Q1292.0 520.5 1306.8 511.1" stroke="#5a2a2c" stroke-width="2.6" fill="none"/></g><rect x="1070.6" y="707.2" width="248.4" height="68.2" fill="#f0a92e"/><g transform="translate(837.7 737.9) scale(1.0)"><circle r="19.6" fill="#8c8c8c" stroke="#f4f4f4" stroke-width="1.3"/><clipPath id="sha"><path d="M-12.6 -13 H12.6 V9.5 Q12.6 13.2 0 14.2 Q-12.6 13.2 -12.6 9.5 Z"/></clipPath><path d="M-12.6 -13 H12.6 V9.5 Q12.6 13.2 0 14.2 Q-12.6 13.2 -12.6 9.5 Z" fill="#f4f4f4"/><g clip-path="url(#sha)"><path d="M-14 -14 L14 14 M14 -14 L-14 14" stroke="#1a110d" stroke-width="7.4"/></g><rect x="-5.2" y="-4.6" width="10.4" height="8.2" rx=".8" fill="#f4f4f4" stroke="#1a110d" stroke-width=".7"/><path d="M0 -4.6 V3.6" stroke="#1a110d" stroke-width=".7"/><path d="M-2.2 -11.8 H2.2 L1.4 -8 H-1.4 Z" fill="#f4f4f4"/><circle cy="-7.6" r="1.6" fill="#f4f4f4"/><path d="M-3.2 12.2 V8.4 H-1.8 V7 H1.8 V8.4 H3.2 V12.2 Z" fill="#f4f4f4"/><circle cy="6" r="1.7" fill="#f4f4f4"/><path id="taa" d="M-22.23 -2.73 A22.4 22.4 0 0 1 22.23 -2.73" fill="none"/><path id="tba" d="M-27.66 4.38 A28.0 28.0 0 0 0 27.66 4.38" fill="none"/><text font-family="Liberation Serif, serif" font-weight="700" font-size="7.3" fill="#f4f4f4"><textPath href="#taa" textLength="64.9" lengthAdjust="spacing">·THE·UNIVERSITY·</textPath></text><text font-family="Liberation Serif, serif" font-weight="700" font-size="7.3" fill="#f4f4f4"><textPath href="#tba" textLength="79.2" lengthAdjust="spacing">OF·EDINBURGH</textPath></text></g><g transform="translate(1103.6 741.6) scale(1.03)"><circle r="19.6" fill="#f4c368" stroke="#fdf1cf" stroke-width="1.3"/><clipPath id="shb"><path d="M-12.6 -13 H12.6 V9.5 Q12.6 13.2 0 14.2 Q-12.6 13.2 -12.6 9.5 Z"/></clipPath><path d="M-12.6 -13 H12.6 V9.5 Q12.6 13.2 0 14.2 Q-12.6 13.2 -12.6 9.5 Z" fill="#fdf1cf"/><g clip-path="url(#shb)"><path d="M-14 -14 L14 14 M14 -14 L-14 14" stroke="#f0a92e" stroke-width="7.4"/></g><rect x="-5.2" y="-4.6" width="10.4" height="8.2" rx=".8" fill="#fdf1cf" stroke="#f0a92e" stroke-width=".7"/><path d="M0 -4.6 V3.6" stroke="#f0a92e" stroke-width=".7"/><path d="M-2.2 -11.8 H2.2 L1.4 -8 H-1.4 Z" fill="#fdf1cf"/><circle cy="-7.6" r="1.6" fill="#fdf1cf"/><path d="M-3.2 12.2 V8.4 H-1.8 V7 H1.8 V8.4 H3.2 V12.2 Z" fill="#fdf1cf"/><circle cy="6" r="1.7" fill="#fdf1cf"/><path id="tab" d="M-22.23 -2.73 A22.4 22.4 0 0 1 22.23 -2.73" fill="none"/><path id="tbb" d="M-27.66 4.38 A28.0 28.0 0 0 0 27.66 4.38" fill="none"/><text font-family="Liberation Serif, serif" font-weight="700" font-size="7.3" fill="#fdf1cf"><textPath href="#tab" textLength="64.9" lengthAdjust="spacing">·THE·UNIVERSITY·</textPath></text><text font-family="Liberation Serif, serif" font-weight="700" font-size="7.3" fill="#fdf1cf"><textPath href="#tbb" textLength="79.2" lengthAdjust="spacing">OF·EDINBURGH</textPath></text></g><g font-family="Liberation Serif, serif" font-size="11" fill="#f2f2f2"><text x="875.4" y="733.8" textLength="160.6" lengthAdjust="spacingAndGlyphs">THE UNIVERSITY <tspan font-style="italic">of</tspan> EDINBURGH</text></g><g font-family="Liberation Sans, sans-serif" font-size="12.6" fill="#fff"><text x="875.5" y="749" textLength="121.4" lengthAdjust="spacing">School of Social and</text><text x="875.5" y="762.5" textLength="95.1" lengthAdjust="spacing">Political Science</text></g><g font-family="Liberation Serif, serif" font-size="11.2" fill="#fdf1cf"><text x="1143" y="737.3" textLength="163.4" lengthAdjust="spacingAndGlyphs">THE UNIVERSITY <tspan font-style="italic">of</tspan> EDINBURGH</text></g><g font-family="Liberation Sans, sans-serif" font-size="12.7" fill="#fdf1cf"><text x="1143" y="752.5" textLength="149" lengthAdjust="spacing">Centre of African Studies</text></g><text x="569" y="752" font-family="Liberation Sans, sans-serif" font-weight="700" font-size="33.5" fill="#fff" stroke="#fff" stroke-width=".9" textLength="205" lengthAdjust="spacing">GENDER<tspan fill="#9b9b9b" stroke="#9b9b9b">.ED</tspan></text></svg>
</body>
</html>
